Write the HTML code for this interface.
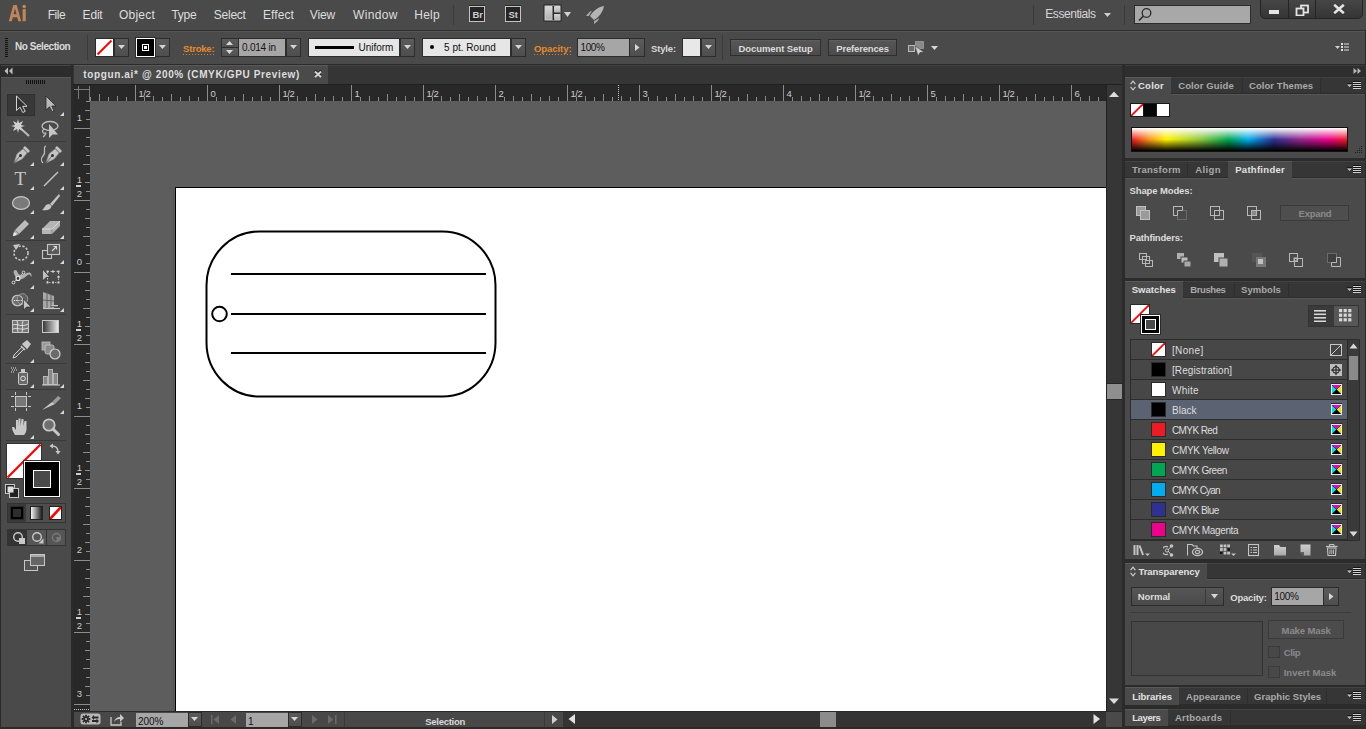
<!DOCTYPE html><html><head><meta charset="utf-8"><style>
*{margin:0;padding:0;box-sizing:border-box}
html,body{width:1366px;height:729px;overflow:hidden;background:#2b2b2b;font-family:"Liberation Sans",sans-serif;color:#d4d4d4;font-size:11px}
div,span,svg{position:absolute}
.t{white-space:nowrap;line-height:1}
.b{font-weight:bold}
</style></head><body><div style="left:0px;top:0px;width:1366px;height:30px;background:#4a4a4a"></div><div style="left:0px;top:30px;width:1366px;height:1px;background:#2e2e2e"></div><svg style="left:8px;top:4px;" width="20" height="18" viewBox="0 0 20 18"><path d="M0.8 17.2 L5.3 1 L8.7 1 L13.2 17.2 L10.2 17.2 L9.2 13.2 L4.8 13.2 L3.8 17.2 Z M5.5 10.2 L8.5 10.2 L7 4.2 Z" fill="#c08659" fill-rule="evenodd"/><rect x="14.6" y="5.2" width="3.2" height="12" fill="#c08659"/><circle cx="16.2" cy="2.6" r="1.8" fill="#c08659"/></svg><div class="t" style="left:47.7px;top:8.74px;font-size:12px;color:#dedede;;letter-spacing:-0.441px">File</div><div class="t" style="left:82.6px;top:8.74px;font-size:12px;color:#dedede;;letter-spacing:-0.189px">Edit</div><div class="t" style="left:119px;top:8.74px;font-size:12px;color:#dedede;;letter-spacing:0.206px">Object</div><div class="t" style="left:171.4px;top:8.74px;font-size:12px;color:#dedede;;letter-spacing:-0.232px">Type</div><div class="t" style="left:213.8px;top:8.74px;font-size:12px;color:#dedede;;letter-spacing:-0.248px">Select</div><div class="t" style="left:263px;top:8.74px;font-size:12px;color:#dedede;;letter-spacing:0.090px">Effect</div><div class="t" style="left:309.8px;top:8.74px;font-size:12px;color:#dedede;;letter-spacing:-0.159px">View</div><div class="t" style="left:353.1px;top:8.74px;font-size:12px;color:#dedede;;letter-spacing:0.346px">Window</div><div class="t" style="left:414.3px;top:8.74px;font-size:12px;color:#dedede;;letter-spacing:0.244px">Help</div><div style="left:453px;top:5px;width:1px;height:20px;background:#3a3a3a"></div><div style="left:1033px;top:5px;width:1px;height:20px;background:#3a3a3a"></div><div style="left:1124px;top:5px;width:1px;height:20px;background:#3a3a3a"></div><div style="left:469px;top:6px;width:16px;height:16px;background:#262626;border:1px solid #c4c4c4;box-shadow:0 -1px 0 #2a2a2a"></div><div class="t" style="left:472.5px;top:9.76px;font-size:9.5px;color:#cdcdcd;font-weight:bold;letter-spacing:-0.2px">Br</div><div style="left:505px;top:6px;width:16px;height:16px;background:#262626;border:1px solid #c4c4c4;box-shadow:0 -1px 0 #2a2a2a"></div><div class="t" style="left:508.5px;top:9.76px;font-size:9.5px;color:#cdcdcd;font-weight:bold;letter-spacing:-0.2px">St</div><svg style="left:543px;top:4px;" width="30" height="19" viewBox="0 0 30 19"><rect x="0.5" y="0.5" width="18" height="17" fill="#222" /><rect x="1.5" y="1.5" width="16" height="15" fill="#d4d4d4"/><defs><linearGradient id="agr" x1="0" y1="0" x2="0" y2="1"><stop offset="0" stop-color="#d8d8d8"/><stop offset="1" stop-color="#b0b0b0"/></linearGradient></defs><rect x="2.5" y="2.5" width="7" height="13" fill="url(#agr)"/><rect x="9.5" y="2" width="2" height="14" fill="#2a2a2a"/><rect x="11" y="2.5" width="6" height="6" fill="url(#agr)"/><rect x="11" y="8.5" width="6.5" height="1.6" fill="#2a2a2a"/><rect x="11" y="10" width="6" height="5.5" fill="url(#agr)"/><polygon points="21,8 28,8 24.5,13" fill="#d0d0d0"/></svg><svg style="left:586px;top:6px;" width="20" height="18" viewBox="0 0 20 18"><path d="M18 0 C12 1 7 5 4 10 L8 14 C13 11 17 6 18 0Z" fill="#b4b4b4"/><path d="M6 5 C4 5 2 7 0 10 L3 10 C4 8 5 6 6 5Z" fill="#a8a8a8"/><path d="M13 12 C13 14 11 16 8 18 L8 15 C10 14 12 13 13 12Z" fill="#a8a8a8"/></svg><div class="t" style="left:1045.3px;top:8.34px;font-size:12px;color:#d6d6d6;;letter-spacing:-0.454px">Essentials</div><svg style="left:1104px;top:13px;" width="7" height="5" viewBox="0 0 7 5"><polygon points="0,0 7,0 3.5,4" fill="#cfcfcf"/></svg><div style="left:1134px;top:5px;width:117px;height:19px;background:#a8a8a8;border:1px solid #2c2c2c"></div><svg style="left:1137px;top:7px;" width="16" height="16" viewBox="0 0 16 16"><circle cx="9.5" cy="6" r="4.3" fill="none" stroke="#2a2a2a" stroke-width="1.3"/><line x1="6.5" y1="9" x2="2" y2="13.5" stroke="#2a2a2a" stroke-width="1.6"/></svg><div style="left:1260px;top:-2px;width:103px;height:21px;background:linear-gradient(#474747,#353535);border:1px solid #242424;border-radius:0 0 5px 5px"></div><div style="left:1288px;top:0px;width:1px;height:18px;background:#242424"></div><div style="left:1315px;top:0px;width:1px;height:18px;background:#242424"></div><div style="left:1269px;top:10px;width:10px;height:4px;background:#e4e4e4"></div><svg style="left:1295px;top:4px;" width="15" height="12" viewBox="0 0 15 12"><rect x="6" y="1.5" width="7" height="7" fill="none" stroke="#e4e4e4" stroke-width="1.8"/><rect x="1.5" y="4.5" width="7" height="7" fill="#3d3d3d" stroke="#e4e4e4" stroke-width="1.8"/></svg><svg style="left:1333px;top:4px;" width="12" height="10" viewBox="0 0 12 10"><path d="M1.2 0.8 L10.8 9.2 M10.8 0.8 L1.2 9.2" stroke="#e4e4e4" stroke-width="2.6"/></svg><div style="left:0px;top:31px;width:1366px;height:1px;background:#565656"></div><div style="left:0px;top:32px;width:1366px;height:32px;background:#4a4a4a"></div><div style="left:0px;top:64px;width:1366px;height:1px;background:#2b2b2b"></div><div style="left:5px;top:38px;width:3px;height:19px;background:repeating-linear-gradient(#111 0 1px,transparent 1px 2px)"></div><div class="t" style="left:14.9px;top:41.53px;font-size:10px;color:#dadada;font-weight:bold;letter-spacing:-0.434px">No Selection</div><div style="left:87px;top:35px;width:1px;height:25px;background:#3a3a3a"></div><div style="left:95px;top:38px;width:19px;height:19px;background:#fff;border:1px solid #2a2a2a"></div><svg style="left:96px;top:39px;" width="17" height="17" viewBox="0 0 17 17"><line x1="1.5" y1="15.5" x2="15.5" y2="1.5" stroke="#f00" stroke-width="2"/></svg><div style="left:114px;top:38px;width:15px;height:19px;background:linear-gradient(#5b5b5b,#4e4e4e);border:1px solid #2c2c2c"></div><svg style="left:118px;top:45px;" width="7" height="5" viewBox="0 0 7 5"><polygon points="0,0 7,0 3.5,4" fill="#d6d6d6"/></svg><div style="left:136px;top:38px;width:19px;height:19px;background:#000;border:1px solid #fff;box-shadow:0 0 0 1px #2a2a2a"></div><div style="left:142px;top:44px;width:7px;height:7px;border:1px solid #fff"></div><div style="left:144px;top:46px;width:3px;height:3px;background:#fff"></div><div style="left:155px;top:38px;width:15px;height:19px;background:linear-gradient(#5b5b5b,#4e4e4e);border:1px solid #2c2c2c"></div><svg style="left:159px;top:45px;" width="7" height="5" viewBox="0 0 7 5"><polygon points="0,0 7,0 3.5,4" fill="#d6d6d6"/></svg><div class="t" style="left:183.1px;top:43.86px;font-size:9.5px;color:#e58a2c;font-weight:bold;letter-spacing:-0.211px">Stroke:</div><div style="left:183.1px;top:53.9px;width:30.9px;height:1px;background:repeating-linear-gradient(90deg,#d9822a 0 1px,transparent 1px 3px)"></div><div style="left:221px;top:38px;width:18px;height:19px;background:#2c2c2c"></div><div style="left:222px;top:39px;width:16px;height:8px;background:linear-gradient(#5c5c5c,#505050)"></div><div style="left:222px;top:48px;width:16px;height:8px;background:linear-gradient(#5c5c5c,#505050)"></div><svg style="left:226px;top:40px;" width="8" height="6" viewBox="0 0 8 6"><polygon points="0,5 7,5 3.5,1" fill="#d8d8d8"/></svg><svg style="left:226px;top:49px;" width="8" height="6" viewBox="0 0 8 6"><polygon points="0,1 7,1 3.5,5" fill="#d8d8d8"/></svg><div style="left:239px;top:38px;width:47px;height:19px;background:#a6a6a6;border:1px solid #2c2c2c;border-left:0"></div><div class="t" style="left:242px;top:42.53px;font-size:10px;color:#141414;;letter-spacing:-0.228px">0.014 in</div><div style="left:286px;top:38px;width:15px;height:19px;background:linear-gradient(#5b5b5b,#4e4e4e);border:1px solid #2c2c2c"></div><svg style="left:290px;top:45px;" width="7" height="5" viewBox="0 0 7 5"><polygon points="0,0 7,0 3.5,4" fill="#d6d6d6"/></svg><div style="left:308px;top:38px;width:92px;height:19px;background:#e6e6e6;border:1px solid #2c2c2c"></div><div style="left:315px;top:46px;width:39px;height:3px;background:#000"></div><div class="t" style="left:358.5px;top:43.23px;font-size:10px;color:#111;;letter-spacing:-0.019px">Uniform</div><div style="left:400px;top:38px;width:15px;height:19px;background:linear-gradient(#5b5b5b,#4e4e4e);border:1px solid #2c2c2c"></div><svg style="left:404px;top:45px;" width="7" height="5" viewBox="0 0 7 5"><polygon points="0,0 7,0 3.5,4" fill="#d6d6d6"/></svg><div style="left:422px;top:38px;width:89px;height:19px;background:#e6e6e6;border:1px solid #2c2c2c"></div><div style="left:430px;top:45px;width:4px;height:4px;background:#000;border-radius:50%"></div><div class="t" style="left:444px;top:43.03px;font-size:10px;color:#111;;letter-spacing:0.018px">5 pt. Round</div><div style="left:511px;top:38px;width:15px;height:19px;background:linear-gradient(#5b5b5b,#4e4e4e);border:1px solid #2c2c2c"></div><svg style="left:515px;top:45px;" width="7" height="5" viewBox="0 0 7 5"><polygon points="0,0 7,0 3.5,4" fill="#d6d6d6"/></svg><div class="t" style="left:534px;top:43.86px;font-size:9.5px;color:#e58a2c;font-weight:bold;letter-spacing:-0.064px">Opacity:</div><div style="left:534px;top:53.9px;width:37px;height:1px;background:repeating-linear-gradient(90deg,#d9822a 0 1px,transparent 1px 3px)"></div><div style="left:577px;top:38px;width:53px;height:19px;background:#a6a6a6;border:1px solid #2c2c2c"></div><div class="t" style="left:580.6px;top:42.53px;font-size:10px;color:#141414;;letter-spacing:-0.426px">100%</div><div style="left:630px;top:38px;width:15px;height:19px;background:linear-gradient(#5b5b5b,#4e4e4e);border:1px solid #2c2c2c;border-left:0"></div><svg style="left:635px;top:44px;" width="5" height="8" viewBox="0 0 5 8"><polygon points="0,0 0,7 4.5,3.5" fill="#d6d6d6"/></svg><div class="t" style="left:651px;top:44.26px;font-size:9.5px;color:#d8d8d8;font-weight:bold;letter-spacing:-0.161px">Style:</div><div style="left:682px;top:38px;width:19px;height:19px;background:#e8e8e8;border:1px solid #2c2c2c"></div><div style="left:701px;top:38px;width:15px;height:19px;background:linear-gradient(#5b5b5b,#4e4e4e);border:1px solid #2c2c2c"></div><svg style="left:705px;top:45px;" width="7" height="5" viewBox="0 0 7 5"><polygon points="0,0 7,0 3.5,4" fill="#d6d6d6"/></svg><div style="left:722px;top:35px;width:1px;height:25px;background:#3a3a3a"></div><div style="left:730px;top:39px;width:91px;height:17px;background:linear-gradient(#575757,#4b4b4b);border:1px solid #2e2e2e;box-shadow:inset 0 1px 0 #5e5e5e"></div><div class="t" style="left:738.5px;top:43.76px;font-size:9.5px;color:#dcdcdc;font-weight:bold;letter-spacing:-0.086px">Document Setup</div><div style="left:828px;top:39px;width:69px;height:17px;background:linear-gradient(#575757,#4b4b4b);border:1px solid #2e2e2e;box-shadow:inset 0 1px 0 #5e5e5e"></div><div class="t" style="left:836.3px;top:43.76px;font-size:9.5px;color:#dcdcdc;font-weight:bold;letter-spacing:-0.174px">Preferences</div><svg style="left:908px;top:40px;" width="18" height="16" viewBox="0 0 18 16"><rect x="0.5" y="5.5" width="6" height="6" fill="#6a6a6a" stroke="#bcbcbc"/><rect x="7.5" y="1.5" width="8" height="7" fill="#8a8a8a" stroke="#bcbcbc" stroke-dasharray="1 1"/><path d="M7 6 L16 12 L12 12.5 L10 16 Z" fill="#d0d0d0" stroke="#333" stroke-width="0.5"/></svg><svg style="left:931px;top:46px;" width="8" height="5" viewBox="0 0 8 5"><polygon points="0,0 7,0 3.5,4" fill="#d6d6d6"/></svg><svg style="left:1335px;top:43px;" width="15" height="9" viewBox="0 0 15 9"><polygon points="0,3 5,3 2.5,6" fill="#d0d0d0"/><g fill="#e0e0e0"><rect x="6" y="0" width="2" height="2"/><rect x="6" y="3" width="2" height="2"/><rect x="6" y="6" width="2" height="2"/><rect x="9" y="0.5" width="5" height="1"/><rect x="9" y="3.5" width="5" height="1"/><rect x="9" y="6.5" width="5" height="1"/></g></svg><div style="left:1365px;top:31px;width:1px;height:34px;background:#2b2b2b"></div><div style="left:1px;top:65px;width:70px;height:12px;background:#2c2c2c;border-top:1px solid #464646"></div><svg style="left:4px;top:67px;" width="10" height="8" viewBox="0 0 10 8"><polygon points="4,0.5 4,7.5 0.5,4" fill="#bdbdbd"/><polygon points="8.5,0.5 8.5,7.5 5,4" fill="#bdbdbd"/></svg><div style="left:1px;top:77px;width:70px;height:650px;background:#4a4a4a;border-top:1px solid #585858"></div><div style="left:26px;top:80px;width:20px;height:4px;background:repeating-linear-gradient(90deg,#111 0 1px,transparent 1px 2px)"></div><div style="left:7px;top:94px;width:28px;height:22px;background:#383838;border:1px solid #303030"></div><div style="left:6px;top:141px;width:60px;height:1px;background:#3a3a3a"></div><div style="left:6px;top:240px;width:60px;height:1px;background:#3a3a3a"></div><div style="left:6px;top:314px;width:60px;height:1px;background:#3a3a3a"></div><div style="left:6px;top:363px;width:60px;height:1px;background:#3a3a3a"></div><div style="left:6px;top:389px;width:60px;height:1px;background:#3a3a3a"></div><div style="left:6px;top:440px;width:60px;height:1px;background:#3a3a3a"></div><svg style="left:10px;top:92px;" width="24" height="24" viewBox="0 0 24 24"><path d="M6.5 4 L6.5 18.5 L10 15.2 L12.8 20.5 L15.2 19.3 L12.6 14.3 L17 14.3 Z" fill="#303030" stroke="#d4d4d4" stroke-width="1" stroke-linejoin="miter"/></svg><svg style="left:39px;top:92px;" width="24" height="24" viewBox="0 0 24 24"><path d="M7 4 L7 18 L10.5 14.8 L13 19.8 L15 19 L12.8 14 L17 14 Z" fill="#b8b8b8" stroke="#2a2a2a" stroke-width="0.8"/></svg><svg style="left:60px;top:112px;" width="4" height="4" viewBox="0 0 4 4"><polygon points="4,0 4,4 0,4" fill="#d8d8d8"/></svg><svg style="left:9px;top:117px;" width="24" height="24" viewBox="0 0 24 24"><path d="M9 9 L20 19" stroke="#bdbdbd" stroke-width="2"/><path d="M9 2 L10 6 L14 4 L12 8 L16 9 L12 10 L14 14 L10 12 L9 16 L8 12 L4 14 L6 10 L2 9 L6 8 L4 4 L8 6Z" fill="#d0d0d0"/></svg><svg style="left:39px;top:118px;" width="24" height="24" viewBox="0 0 24 24"><ellipse cx="11" cy="8" rx="8" ry="4.5" fill="none" stroke="#bdbdbd" stroke-width="1.3"/><path d="M5 11 C2 13 4 16 6 15 C8 14 6 18 4 19" fill="none" stroke="#bdbdbd" stroke-width="1.2"/><path d="M10 6 L10 20 L13.5 16.5 L19 16.5Z" fill="#c4c4c4"/></svg><svg style="left:10px;top:142px;" width="24" height="24" viewBox="0 0 24 24"><path d="M4 21 L7 12 L13 7 L17 11 L12 17 Z" fill="#c4c4c4" stroke="#9a9a9a" stroke-width="0.6"/><path d="M13 6 L15 4 L20 9 L18 11Z" fill="#c4c4c4"/><circle cx="10.5" cy="13.5" r="1.5" fill="#333"/><line x1="4" y1="21" x2="10" y2="14" stroke="#444" stroke-width="0.8"/></svg><svg style="left:30px;top:162px;" width="4" height="4" viewBox="0 0 4 4"><polygon points="4,0 4,4 0,4" fill="#d8d8d8"/></svg><svg style="left:39px;top:142px;" width="24" height="24" viewBox="0 0 24 24"><g transform="translate(3,0)"><path d="M4 21 L7 12 L13 7 L17 11 L12 17 Z" fill="#c4c4c4" stroke="#9a9a9a" stroke-width="0.6"/><path d="M13 6 L15 4 L20 9 L18 11Z" fill="#c4c4c4"/><circle cx="10.5" cy="13.5" r="1.5" fill="#333"/><line x1="4" y1="21" x2="10" y2="14" stroke="#444" stroke-width="0.8"/></g><path d="M7 4 C3 5 8 10 4 14 C2 16 2 19 4 21" fill="none" stroke="#bdbdbd" stroke-width="1.2"/></svg><svg style="left:60px;top:162px;" width="4" height="4" viewBox="0 0 4 4"><polygon points="4,0 4,4 0,4" fill="#d8d8d8"/></svg><div class="t" style="left:14.6px;top:169.22px;font-size:19px;color:#c8c8c8;font-family:'Liberation Serif',serif">T</div><svg style="left:30px;top:186px;" width="4" height="4" viewBox="0 0 4 4"><polygon points="4,0 4,4 0,4" fill="#d8d8d8"/></svg><svg style="left:39px;top:167px;" width="24" height="24" viewBox="0 0 24 24"><line x1="5" y1="19" x2="19" y2="5" stroke="#c4c4c4" stroke-width="1.4"/></svg><svg style="left:60px;top:186px;" width="4" height="4" viewBox="0 0 4 4"><polygon points="4,0 4,4 0,4" fill="#d8d8d8"/></svg><svg style="left:9px;top:191px;" width="24" height="24" viewBox="0 0 24 24"><ellipse cx="12" cy="12" rx="8.5" ry="6.3" fill="#7a7a7a" stroke="#c8c8c8" stroke-width="1.2"/></svg><svg style="left:30px;top:210px;" width="4" height="4" viewBox="0 0 4 4"><polygon points="4,0 4,4 0,4" fill="#d8d8d8"/></svg><svg style="left:39px;top:191px;" width="24" height="24" viewBox="0 0 24 24"><path d="M20 3 L11 13 L13 15 L21 5Z" fill="#c4c4c4"/><path d="M10 13 C6 13 6 17 3 19 C7 20 12 19 12.5 15Z" fill="#c4c4c4"/></svg><svg style="left:60px;top:210px;" width="4" height="4" viewBox="0 0 4 4"><polygon points="4,0 4,4 0,4" fill="#d8d8d8"/></svg><svg style="left:9px;top:216px;" width="24" height="24" viewBox="0 0 24 24"><path d="M4 20 L6 14 L16 4 L20 8 L10 18 Z" fill="#bcbcbc" stroke="#8a8a8a" stroke-width="0.6"/><path d="M4 20 L5 16 L8 19Z" fill="#eee"/><line x1="6" y1="14" x2="10" y2="18" stroke="#777" stroke-width="0.8"/></svg><svg style="left:30px;top:235px;" width="4" height="4" viewBox="0 0 4 4"><polygon points="4,0 4,4 0,4" fill="#d8d8d8"/></svg><svg style="left:39px;top:215px;" width="24" height="24" viewBox="0 0 24 24"><path d="M3 14 L11 6 L21 6 L21 11 L13 19 L3 19Z" fill="#b4b4b4"/><path d="M3 14 L13 14 L21 6" fill="none" stroke="#d8d8d8" stroke-width="1"/><path d="M13 14 L13 19" stroke="#888" stroke-width="1"/></svg><svg style="left:60px;top:235px;" width="4" height="4" viewBox="0 0 4 4"><polygon points="4,0 4,4 0,4" fill="#d8d8d8"/></svg><svg style="left:9px;top:240px;" width="24" height="24" viewBox="0 0 24 24"><circle cx="12" cy="13" r="7" fill="none" stroke="#c4c4c4" stroke-width="1.6" stroke-dasharray="2.2 1.6"/><polygon points="4,5 11,4 7,10" fill="#c4c4c4"/></svg><svg style="left:30px;top:260px;" width="4" height="4" viewBox="0 0 4 4"><polygon points="4,0 4,4 0,4" fill="#d8d8d8"/></svg><svg style="left:39px;top:240px;" width="24" height="24" viewBox="0 0 24 24"><rect x="3.5" y="10.5" width="9" height="8" fill="none" stroke="#c4c4c4" stroke-width="1.1"/><rect x="8.5" y="4.5" width="12" height="10" fill="#5a5a5a" stroke="#c4c4c4" stroke-width="1.1"/><path d="M13 11 L17.5 6.5 M14.5 6.5 L17.5 6.5 L17.5 9.5" stroke="#d8d8d8" stroke-width="1.1" fill="none"/></svg><svg style="left:60px;top:260px;" width="4" height="4" viewBox="0 0 4 4"><polygon points="4,0 4,4 0,4" fill="#d8d8d8"/></svg><svg style="left:9px;top:265px;" width="24" height="24" viewBox="0 0 24 24"><path d="M5 5.5 C4 7 5 9 6 11 C7 14 9 15 13 14 C16 13 18 10 20 9.5 C21.5 9.5 22 11 22 12.5 C23.5 10 22 7.5 20 7.5 C17 7.5 15 10 12 10 C9 10 8.5 6 7 5 Z" fill="#b0b0b0"/><path d="M4.5 17.5 L9 13.5 L14.5 7.5" stroke="#e0e0e0" stroke-width="0.9"/><circle cx="9" cy="13.5" r="2" fill="#333" stroke="#f0f0f0" stroke-width="1.1"/><circle cx="4.5" cy="17.5" r="1.4" fill="#444" stroke="#e8e8e8" stroke-width="0.9"/><circle cx="14.5" cy="7.5" r="1.4" fill="#444" stroke="#e8e8e8" stroke-width="0.9"/></svg><svg style="left:30px;top:285px;" width="4" height="4" viewBox="0 0 4 4"><polygon points="4,0 4,4 0,4" fill="#d8d8d8"/></svg><svg style="left:39px;top:265px;" width="24" height="24" viewBox="0 0 24 24"><rect x="8.5" y="6.5" width="11" height="11" fill="none" stroke="#c8c8c8" stroke-width="0.9" stroke-dasharray="1.5 1.5"/><g fill="#d0d0d0"><rect x="7.5" y="5.5" width="2" height="2"/><rect x="13" y="5.5" width="2" height="2"/><rect x="18.5" y="5.5" width="2" height="2"/><rect x="7.5" y="16.5" width="2" height="2"/><rect x="13" y="16.5" width="2" height="2"/><rect x="18.5" y="16.5" width="2" height="2"/><rect x="18.5" y="11" width="2" height="2"/></g><path d="M3.5 4 L3.5 16 L7 12.5 L11 12.5 Z" fill="#c0c0c0" stroke="#222" stroke-width="0.6"/></svg><svg style="left:9px;top:289px;" width="24" height="24" viewBox="0 0 24 24"><circle cx="8.5" cy="11.5" r="5.3" fill="#6e6e6e" stroke="#bdbdbd" stroke-width="1.1"/><circle cx="13.5" cy="10" r="5.3" fill="#5e5e5e" stroke="#9a9a9a" stroke-width="1"/><circle cx="8.5" cy="11.5" r="5.3" fill="none" stroke="#bdbdbd" stroke-width="1.1"/><path d="M5 11.5 H15" stroke="#f0f0f0" stroke-width="1.1" stroke-dasharray="1.2 1"/><path d="M14.5 10 L14.5 21 L17.5 18 L22 18 Z" fill="#c4c4c4" stroke="#222" stroke-width="0.6"/></svg><svg style="left:30px;top:308px;" width="4" height="4" viewBox="0 0 4 4"><polygon points="4,0 4,4 0,4" fill="#d8d8d8"/></svg><svg style="left:39px;top:289px;" width="24" height="24" viewBox="0 0 24 24"><path d="M4 3 L15 7 L15 20 L4 20 Z" fill="#a8a8a8"/><path d="M8 4.5 V20 M12 6 V20 M4 11 L15 12" stroke="#5a5a5a" stroke-width="0.9"/><path d="M12.5 16 H19 V18 H12.5Z M4 19 H21 V20.5 H4Z" fill="#c8c8c8"/><path d="M12 17.5 H20 M3.5 20.5 H21" stroke="#2a2a2a" stroke-width="0.6"/></svg><svg style="left:60px;top:308px;" width="4" height="4" viewBox="0 0 4 4"><polygon points="4,0 4,4 0,4" fill="#d8d8d8"/></svg><svg style="left:9px;top:315px;" width="24" height="24" viewBox="0 0 24 24"><rect x="3.5" y="5.5" width="16" height="12" fill="#777" stroke="#c8c8c8" stroke-width="1"/><path d="M4 10 C8 8 12 13 19 9 M4 14 C9 12 12 16 19 13 M8 6 C10 10 7 13 9 17 M14 6 C12 10 15 13 13 17" stroke="#e8e8e8" stroke-width="0.9" fill="none"/></svg><svg style="left:39px;top:315px" width="24" height="24"><defs><linearGradient id="gr1"><stop offset="0" stop-color="#333"/><stop offset="1" stop-color="#eee"/></linearGradient></defs><rect x="3.5" y="5.5" width="16" height="12" fill="url(#gr1)" stroke="#c8c8c8" stroke-width="1"/></svg><svg style="left:9px;top:338px;" width="24" height="24" viewBox="0 0 24 24"><path d="M4 20 L5 17 L13 9 L15 11 L7 19Z" fill="#555" stroke="#d0d0d0" stroke-width="1"/><path d="M12 8 L16 12 M14 6 L18 3 L21 6 L18 10Z" fill="#c8c8c8" stroke="#c8c8c8" stroke-width="1.5"/></svg><svg style="left:30px;top:359px;" width="4" height="4" viewBox="0 0 4 4"><polygon points="4,0 4,4 0,4" fill="#d8d8d8"/></svg><svg style="left:39px;top:338px;" width="24" height="24" viewBox="0 0 24 24"><rect x="3" y="4" width="8" height="8" fill="#9a9a9a" stroke="#c0c0c0" stroke-width="0.8"/><rect x="6" y="7" width="9" height="9" rx="2" fill="#8a8a8a" stroke="#c8c8c8" stroke-width="0.8"/><circle cx="16" cy="16" r="5" fill="#6a6a6a" stroke="#d0d0d0" stroke-width="1.2"/></svg><svg style="left:9px;top:364px;" width="24" height="24" viewBox="0 0 24 24"><rect x="9.5" y="8.5" width="9" height="12" rx="1" fill="#6a6a6a" stroke="#c8c8c8" stroke-width="1"/><rect x="12" y="5" width="4" height="3" fill="#c8c8c8"/><circle cx="14" cy="14.5" r="2.3" fill="none" stroke="#e0e0e0" stroke-width="1"/><path d="M2 4 h1 M4 4 h1 M6 4 h1 M3 6 h1 M5 6 h1 M7 6 h1 M2 8 h1 M4 8 h1" stroke="#e0e0e0" stroke-width="1"/></svg><svg style="left:30px;top:384px;" width="4" height="4" viewBox="0 0 4 4"><polygon points="4,0 4,4 0,4" fill="#d8d8d8"/></svg><svg style="left:39px;top:365px;" width="24" height="24" viewBox="0 0 24 24"><rect x="4.5" y="11.5" width="4" height="8" fill="#888" stroke="#c8c8c8" stroke-width="0.8"/><rect x="9.5" y="4.5" width="4" height="15" fill="#888" stroke="#c8c8c8" stroke-width="0.8"/><rect x="14.5" y="8.5" width="4" height="11" fill="#888" stroke="#c8c8c8" stroke-width="0.8"/><line x1="3" y1="20" x2="21" y2="20" stroke="#d0d0d0" stroke-width="1"/></svg><svg style="left:60px;top:384px;" width="4" height="4" viewBox="0 0 4 4"><polygon points="4,0 4,4 0,4" fill="#d8d8d8"/></svg><svg style="left:9px;top:390px;" width="24" height="24" viewBox="0 0 24 24"><rect x="6.5" y="6.5" width="11" height="10" fill="#777" stroke="#c8c8c8" stroke-width="1"/><path d="M2 6.5 h3 M19 6.5 h3 M2 16.5 h3 M19 16.5 h3 M6.5 2 v3 M17.5 2 v3 M6.5 18 v3 M17.5 18 v3" stroke="#c8c8c8" stroke-width="1"/></svg><svg style="left:39px;top:391px;" width="24" height="24" viewBox="0 0 24 24"><path d="M3 19 L13 11 L16 13 Z" fill="#c8c8c8"/><path d="M13 11 L19 5 L22 7 L16 13Z" fill="#9a9a9a"/></svg><svg style="left:60px;top:410px;" width="4" height="4" viewBox="0 0 4 4"><polygon points="4,0 4,4 0,4" fill="#d8d8d8"/></svg><svg style="left:9px;top:415px;" width="24" height="24" viewBox="0 0 24 24"><path d="M6 20 C4 17 3 14 3 12 L5 12 L7 15 L7 5 L9 5 L9 11 L9.5 3.5 L11.5 3.5 L11.5 11 L12.5 4 L14.5 4 L14.5 11 L15.5 6 L17.5 6 L17.5 14 C17.5 17 16 19 15 20Z" fill="#c8c8c8"/></svg><svg style="left:30px;top:435px;" width="4" height="4" viewBox="0 0 4 4"><polygon points="4,0 4,4 0,4" fill="#d8d8d8"/></svg><svg style="left:39px;top:415px;" width="24" height="24" viewBox="0 0 24 24"><circle cx="10" cy="10" r="5.7" fill="#6f6f6f" stroke="#c8c8c8" stroke-width="1.8"/><line x1="14" y1="14" x2="19.5" y2="19.5" stroke="#c8c8c8" stroke-width="3" stroke-linecap="round"/></svg><div style="left:6px;top:443px;width:36px;height:36px;background:#fff;border:1px solid #333"></div><svg style="left:7px;top:444px;" width="34" height="34" viewBox="0 0 34 34"><line x1="0.5" y1="33.5" x2="33.5" y2="0.5" stroke="#f00" stroke-width="2.2"/></svg><div style="left:24px;top:461px;width:36px;height:36px;background:#000;border:1px solid #fff;box-shadow:0 0 0 1px #333"></div><div style="left:33px;top:470px;width:18px;height:18px;background:#4a4a4a;border:1px solid #fff;box-shadow:0 0 0 1px #000"></div><svg style="left:49px;top:443px;" width="13" height="13" viewBox="0 0 13 13"><path d="M3 3 C7 3 9 5 9 9" fill="none" stroke="#c8c8c8" stroke-width="1.3"/><polygon points="0.5,3 4,0.5 4,5.5" fill="#c8c8c8"/><polygon points="9,11.5 6.5,8 11.5,8" fill="#c8c8c8"/></svg><svg style="left:5px;top:484px;" width="14" height="14" viewBox="0 0 14 14"><rect x="0.5" y="0.5" width="9" height="9" fill="#222" stroke="#c8c8c8" stroke-width="1"/><rect x="4.5" y="4.5" width="9" height="9" fill="#222" stroke="#c8c8c8" stroke-width="1"/><rect x="2.5" y="2.5" width="6" height="6" fill="#e0e0e0"/></svg><div style="left:7px;top:503px;width:59px;height:20px;background:#3a3a3a;border:1px solid #333"></div><div style="left:26px;top:504px;width:20px;height:18px;background:#4e4e4e"></div><div style="left:46px;top:504px;width:19px;height:18px;background:#4e4e4e"></div><div style="left:10px;top:506px;width:14px;height:14px;background:#000;border:1px solid #2a2a2a"></div><div style="left:13px;top:509px;width:8px;height:8px;background:#2e2e2e"></div><svg style="left:30px;top:506px" width="13" height="14"><defs><linearGradient id="gr2"><stop offset="0" stop-color="#fff"/><stop offset="1" stop-color="#111"/></linearGradient></defs><rect x="0.5" y="0.5" width="12" height="13" fill="url(#gr2)" stroke="#222"/></svg><div style="left:49px;top:506px;width:13px;height:14px;background:#fff;border:1px solid #222"></div><svg style="left:50px;top:507px;" width="11" height="12" viewBox="0 0 11 12"><line x1="0" y1="12" x2="11" y2="0" stroke="#f00" stroke-width="2.6"/></svg><div style="left:7px;top:529px;width:59px;height:17px;background:#333;border:1px solid #333"></div><div style="left:27px;top:530px;width:19px;height:15px;background:#555"></div><div style="left:47px;top:530px;width:18px;height:15px;background:#555"></div><svg style="left:12px;top:531px;" width="14" height="14" viewBox="0 0 14 14"><circle cx="6" cy="6" r="4.3" fill="none" stroke="#c8c8c8" stroke-width="1.4"/><rect x="7" y="7" width="6" height="6" fill="#c8c8c8"/></svg><svg style="left:31px;top:531px;" width="14" height="14" viewBox="0 0 14 14"><circle cx="6" cy="6" r="4.3" fill="#555" stroke="#c8c8c8" stroke-width="1.4"/><path d="M8 8 L13 8 L13 13 L8 13Z" fill="none" stroke="#c8c8c8" stroke-width="0"/><polygon points="7.5,12.5 12.5,7.5 12.5,12.5" fill="#c8c8c8"/></svg><svg style="left:50px;top:531px;" width="14" height="14" viewBox="0 0 14 14"><circle cx="6.5" cy="6.5" r="4" fill="none" stroke="#7a7a7a" stroke-width="1.3"/><rect x="6.5" y="6" width="4" height="4" fill="#7a7a7a"/></svg><svg style="left:24px;top:554px;" width="22" height="17" viewBox="0 0 22 17"><rect x="0.5" y="6.5" width="13" height="10" fill="#555" stroke="#c8c8c8" stroke-width="1"/><rect x="6.5" y="0.5" width="14" height="11" fill="#666" stroke="#c8c8c8" stroke-width="1"/><rect x="7" y="1" width="13" height="2" fill="#aaa"/></svg><div style="left:73px;top:65px;width:1049px;height:19px;background:#353535;border-top:1px solid #424242"></div><div style="left:74px;top:65px;width:254px;height:19px;background:#4a4a4a;border-top:1px solid #5a5a5a"></div><div class="t" style="left:83.2px;top:70.13px;font-size:10px;color:#dedede;font-weight:bold;letter-spacing:0.643px">topgun.ai* @ 200% (CMYK/GPU Preview)</div><svg style="left:314px;top:70px;" width="8" height="8" viewBox="0 0 8 8"><path d="M1 0.5 L7 6 M7 0.5 L1 6" stroke="#111" stroke-width="1.8"/><path d="M1 1.5 L7 7 M7 1.5 L1 7" stroke="#d8d8d8" stroke-width="1.8"/></svg><div style="left:73px;top:84px;width:1033px;height:17px;background:#282828"></div><div style="left:73px;top:101px;width:17px;height:610px;background:#282828"></div><div style="left:78px;top:86px;width:1px;height:13px;background:#7a7a7a"></div><div style="left:89px;top:86px;width:1px;height:15px;background:#7a7a7a"></div><div style="left:74px;top:89px;width:16px;height:1px;background:#7a7a7a"></div><div style="left:73px;top:84px;width:1049px;height:1px;background:#202020"></div><div style="left:90px;top:101px;width:1016px;height:610px;background:#5d5d5d"></div><svg style="left:73px;top:84px;" width="1033" height="17" viewBox="0 0 1033 17"><rect x="17" y="13" width="1" height="4" fill="#8c8c8c"/><rect x="26" y="10" width="1" height="7" fill="#8c8c8c"/><rect x="35" y="13" width="1" height="4" fill="#8c8c8c"/><rect x="44" y="12" width="1" height="5" fill="#8c8c8c"/><rect x="53" y="13" width="1" height="4" fill="#8c8c8c"/><rect x="62" y="1" width="1" height="16" fill="#8c8c8c"/><rect x="71" y="13" width="1" height="4" fill="#8c8c8c"/><rect x="80" y="12" width="1" height="5" fill="#8c8c8c"/><rect x="89" y="13" width="1" height="4" fill="#8c8c8c"/><rect x="98" y="10" width="1" height="7" fill="#8c8c8c"/><rect x="107" y="13" width="1" height="4" fill="#8c8c8c"/><rect x="116" y="12" width="1" height="5" fill="#8c8c8c"/><rect x="125" y="13" width="1" height="4" fill="#8c8c8c"/><rect x="134" y="1" width="1" height="16" fill="#8c8c8c"/><rect x="143" y="13" width="1" height="4" fill="#8c8c8c"/><rect x="152" y="12" width="1" height="5" fill="#8c8c8c"/><rect x="161" y="13" width="1" height="4" fill="#8c8c8c"/><rect x="170" y="10" width="1" height="7" fill="#8c8c8c"/><rect x="179" y="13" width="1" height="4" fill="#8c8c8c"/><rect x="188" y="12" width="1" height="5" fill="#8c8c8c"/><rect x="197" y="13" width="1" height="4" fill="#8c8c8c"/><rect x="206" y="1" width="1" height="16" fill="#8c8c8c"/><rect x="215" y="13" width="1" height="4" fill="#8c8c8c"/><rect x="224" y="12" width="1" height="5" fill="#8c8c8c"/><rect x="233" y="13" width="1" height="4" fill="#8c8c8c"/><rect x="242" y="10" width="1" height="7" fill="#8c8c8c"/><rect x="251" y="13" width="1" height="4" fill="#8c8c8c"/><rect x="260" y="12" width="1" height="5" fill="#8c8c8c"/><rect x="269" y="13" width="1" height="4" fill="#8c8c8c"/><rect x="278" y="1" width="1" height="16" fill="#8c8c8c"/><rect x="287" y="13" width="1" height="4" fill="#8c8c8c"/><rect x="296" y="12" width="1" height="5" fill="#8c8c8c"/><rect x="305" y="13" width="1" height="4" fill="#8c8c8c"/><rect x="314" y="10" width="1" height="7" fill="#8c8c8c"/><rect x="323" y="13" width="1" height="4" fill="#8c8c8c"/><rect x="332" y="12" width="1" height="5" fill="#8c8c8c"/><rect x="341" y="13" width="1" height="4" fill="#8c8c8c"/><rect x="350" y="1" width="1" height="16" fill="#8c8c8c"/><rect x="359" y="13" width="1" height="4" fill="#8c8c8c"/><rect x="368" y="12" width="1" height="5" fill="#8c8c8c"/><rect x="377" y="13" width="1" height="4" fill="#8c8c8c"/><rect x="386" y="10" width="1" height="7" fill="#8c8c8c"/><rect x="395" y="13" width="1" height="4" fill="#8c8c8c"/><rect x="404" y="12" width="1" height="5" fill="#8c8c8c"/><rect x="413" y="13" width="1" height="4" fill="#8c8c8c"/><rect x="422" y="1" width="1" height="16" fill="#8c8c8c"/><rect x="431" y="13" width="1" height="4" fill="#8c8c8c"/><rect x="440" y="12" width="1" height="5" fill="#8c8c8c"/><rect x="449" y="13" width="1" height="4" fill="#8c8c8c"/><rect x="458" y="10" width="1" height="7" fill="#8c8c8c"/><rect x="467" y="13" width="1" height="4" fill="#8c8c8c"/><rect x="476" y="12" width="1" height="5" fill="#8c8c8c"/><rect x="485" y="13" width="1" height="4" fill="#8c8c8c"/><rect x="494" y="1" width="1" height="16" fill="#8c8c8c"/><rect x="503" y="13" width="1" height="4" fill="#8c8c8c"/><rect x="512" y="12" width="1" height="5" fill="#8c8c8c"/><rect x="521" y="13" width="1" height="4" fill="#8c8c8c"/><rect x="530" y="10" width="1" height="7" fill="#8c8c8c"/><rect x="539" y="13" width="1" height="4" fill="#8c8c8c"/><rect x="548" y="12" width="1" height="5" fill="#8c8c8c"/><rect x="557" y="13" width="1" height="4" fill="#8c8c8c"/><rect x="566" y="1" width="1" height="16" fill="#8c8c8c"/><rect x="575" y="13" width="1" height="4" fill="#8c8c8c"/><rect x="584" y="12" width="1" height="5" fill="#8c8c8c"/><rect x="593" y="13" width="1" height="4" fill="#8c8c8c"/><rect x="602" y="10" width="1" height="7" fill="#8c8c8c"/><rect x="611" y="13" width="1" height="4" fill="#8c8c8c"/><rect x="620" y="12" width="1" height="5" fill="#8c8c8c"/><rect x="629" y="13" width="1" height="4" fill="#8c8c8c"/><rect x="638" y="1" width="1" height="16" fill="#8c8c8c"/><rect x="647" y="13" width="1" height="4" fill="#8c8c8c"/><rect x="656" y="12" width="1" height="5" fill="#8c8c8c"/><rect x="665" y="13" width="1" height="4" fill="#8c8c8c"/><rect x="674" y="10" width="1" height="7" fill="#8c8c8c"/><rect x="683" y="13" width="1" height="4" fill="#8c8c8c"/><rect x="692" y="12" width="1" height="5" fill="#8c8c8c"/><rect x="701" y="13" width="1" height="4" fill="#8c8c8c"/><rect x="710" y="1" width="1" height="16" fill="#8c8c8c"/><rect x="719" y="13" width="1" height="4" fill="#8c8c8c"/><rect x="728" y="12" width="1" height="5" fill="#8c8c8c"/><rect x="737" y="13" width="1" height="4" fill="#8c8c8c"/><rect x="746" y="10" width="1" height="7" fill="#8c8c8c"/><rect x="755" y="13" width="1" height="4" fill="#8c8c8c"/><rect x="764" y="12" width="1" height="5" fill="#8c8c8c"/><rect x="773" y="13" width="1" height="4" fill="#8c8c8c"/><rect x="782" y="1" width="1" height="16" fill="#8c8c8c"/><rect x="791" y="13" width="1" height="4" fill="#8c8c8c"/><rect x="800" y="12" width="1" height="5" fill="#8c8c8c"/><rect x="809" y="13" width="1" height="4" fill="#8c8c8c"/><rect x="818" y="10" width="1" height="7" fill="#8c8c8c"/><rect x="827" y="13" width="1" height="4" fill="#8c8c8c"/><rect x="836" y="12" width="1" height="5" fill="#8c8c8c"/><rect x="845" y="13" width="1" height="4" fill="#8c8c8c"/><rect x="854" y="1" width="1" height="16" fill="#8c8c8c"/><rect x="863" y="13" width="1" height="4" fill="#8c8c8c"/><rect x="872" y="12" width="1" height="5" fill="#8c8c8c"/><rect x="881" y="13" width="1" height="4" fill="#8c8c8c"/><rect x="890" y="10" width="1" height="7" fill="#8c8c8c"/><rect x="899" y="13" width="1" height="4" fill="#8c8c8c"/><rect x="908" y="12" width="1" height="5" fill="#8c8c8c"/><rect x="917" y="13" width="1" height="4" fill="#8c8c8c"/><rect x="926" y="1" width="1" height="16" fill="#8c8c8c"/><rect x="935" y="13" width="1" height="4" fill="#8c8c8c"/><rect x="944" y="12" width="1" height="5" fill="#8c8c8c"/><rect x="953" y="13" width="1" height="4" fill="#8c8c8c"/><rect x="962" y="10" width="1" height="7" fill="#8c8c8c"/><rect x="971" y="13" width="1" height="4" fill="#8c8c8c"/><rect x="980" y="12" width="1" height="5" fill="#8c8c8c"/><rect x="989" y="13" width="1" height="4" fill="#8c8c8c"/><rect x="998" y="1" width="1" height="16" fill="#8c8c8c"/><rect x="1007" y="13" width="1" height="4" fill="#8c8c8c"/><rect x="1016" y="12" width="1" height="5" fill="#8c8c8c"/><rect x="1025" y="13" width="1" height="4" fill="#8c8c8c"/><rect x="545" y="1" width="1" height="1" fill="#c8c8c8"/><rect x="545" y="3" width="1" height="1" fill="#c8c8c8"/><rect x="545" y="5" width="1" height="1" fill="#c8c8c8"/><rect x="545" y="7" width="1" height="1" fill="#c8c8c8"/><rect x="545" y="9" width="1" height="1" fill="#c8c8c8"/><rect x="545" y="11" width="1" height="1" fill="#c8c8c8"/><rect x="545" y="13" width="1" height="1" fill="#c8c8c8"/><rect x="545" y="15" width="1" height="1" fill="#c8c8c8"/></svg><div class="t" style="left:138.5px;top:89.16px;font-size:9.5px;color:#cdcdcd;letter-spacing:-0.5px">1/2</div><div class="t" style="left:210.5px;top:89.16px;font-size:9.5px;color:#cdcdcd;letter-spacing:-0.5px">0</div><div class="t" style="left:282.5px;top:89.16px;font-size:9.5px;color:#cdcdcd;letter-spacing:-0.5px">1/2</div><div class="t" style="left:354.5px;top:89.16px;font-size:9.5px;color:#cdcdcd;letter-spacing:-0.5px">1</div><div class="t" style="left:426.5px;top:89.16px;font-size:9.5px;color:#cdcdcd;letter-spacing:-0.5px">1/2</div><div class="t" style="left:498.5px;top:89.16px;font-size:9.5px;color:#cdcdcd;letter-spacing:-0.5px">2</div><div class="t" style="left:570.5px;top:89.16px;font-size:9.5px;color:#cdcdcd;letter-spacing:-0.5px">1/2</div><div class="t" style="left:642.5px;top:89.16px;font-size:9.5px;color:#cdcdcd;letter-spacing:-0.5px">3</div><div class="t" style="left:714.5px;top:89.16px;font-size:9.5px;color:#cdcdcd;letter-spacing:-0.5px">1/2</div><div class="t" style="left:786.5px;top:89.16px;font-size:9.5px;color:#cdcdcd;letter-spacing:-0.5px">4</div><div class="t" style="left:858.5px;top:89.16px;font-size:9.5px;color:#cdcdcd;letter-spacing:-0.5px">1/2</div><div class="t" style="left:930.5px;top:89.16px;font-size:9.5px;color:#cdcdcd;letter-spacing:-0.5px">5</div><div class="t" style="left:1002.5px;top:89.16px;font-size:9.5px;color:#cdcdcd;letter-spacing:-0.5px">1/2</div><div class="t" style="left:1074.5px;top:89.16px;font-size:9.5px;color:#cdcdcd;letter-spacing:-0.5px">6</div><svg style="left:73px;top:101px;" width="17" height="610" viewBox="0 0 17 610"><rect x="13" y="0" width="4" height="1" fill="#8c8c8c"/><rect x="12" y="9" width="5" height="1" fill="#8c8c8c"/><rect x="13" y="18" width="4" height="1" fill="#8c8c8c"/><rect x="1" y="27" width="16" height="1" fill="#8c8c8c"/><rect x="13" y="36" width="4" height="1" fill="#8c8c8c"/><rect x="12" y="45" width="5" height="1" fill="#8c8c8c"/><rect x="13" y="54" width="4" height="1" fill="#8c8c8c"/><rect x="10" y="63" width="7" height="1" fill="#8c8c8c"/><rect x="13" y="72" width="4" height="1" fill="#8c8c8c"/><rect x="12" y="81" width="5" height="1" fill="#8c8c8c"/><rect x="13" y="90" width="4" height="1" fill="#8c8c8c"/><rect x="1" y="99" width="16" height="1" fill="#8c8c8c"/><rect x="13" y="108" width="4" height="1" fill="#8c8c8c"/><rect x="12" y="117" width="5" height="1" fill="#8c8c8c"/><rect x="13" y="126" width="4" height="1" fill="#8c8c8c"/><rect x="10" y="135" width="7" height="1" fill="#8c8c8c"/><rect x="13" y="144" width="4" height="1" fill="#8c8c8c"/><rect x="12" y="153" width="5" height="1" fill="#8c8c8c"/><rect x="13" y="162" width="4" height="1" fill="#8c8c8c"/><rect x="1" y="171" width="16" height="1" fill="#8c8c8c"/><rect x="13" y="180" width="4" height="1" fill="#8c8c8c"/><rect x="12" y="189" width="5" height="1" fill="#8c8c8c"/><rect x="13" y="198" width="4" height="1" fill="#8c8c8c"/><rect x="10" y="207" width="7" height="1" fill="#8c8c8c"/><rect x="13" y="216" width="4" height="1" fill="#8c8c8c"/><rect x="12" y="225" width="5" height="1" fill="#8c8c8c"/><rect x="13" y="234" width="4" height="1" fill="#8c8c8c"/><rect x="1" y="243" width="16" height="1" fill="#8c8c8c"/><rect x="13" y="252" width="4" height="1" fill="#8c8c8c"/><rect x="12" y="261" width="5" height="1" fill="#8c8c8c"/><rect x="13" y="270" width="4" height="1" fill="#8c8c8c"/><rect x="10" y="279" width="7" height="1" fill="#8c8c8c"/><rect x="13" y="288" width="4" height="1" fill="#8c8c8c"/><rect x="12" y="297" width="5" height="1" fill="#8c8c8c"/><rect x="13" y="306" width="4" height="1" fill="#8c8c8c"/><rect x="1" y="315" width="16" height="1" fill="#8c8c8c"/><rect x="13" y="324" width="4" height="1" fill="#8c8c8c"/><rect x="12" y="333" width="5" height="1" fill="#8c8c8c"/><rect x="13" y="342" width="4" height="1" fill="#8c8c8c"/><rect x="10" y="351" width="7" height="1" fill="#8c8c8c"/><rect x="13" y="360" width="4" height="1" fill="#8c8c8c"/><rect x="12" y="369" width="5" height="1" fill="#8c8c8c"/><rect x="13" y="378" width="4" height="1" fill="#8c8c8c"/><rect x="1" y="387" width="16" height="1" fill="#8c8c8c"/><rect x="13" y="396" width="4" height="1" fill="#8c8c8c"/><rect x="12" y="405" width="5" height="1" fill="#8c8c8c"/><rect x="13" y="414" width="4" height="1" fill="#8c8c8c"/><rect x="10" y="423" width="7" height="1" fill="#8c8c8c"/><rect x="13" y="432" width="4" height="1" fill="#8c8c8c"/><rect x="12" y="441" width="5" height="1" fill="#8c8c8c"/><rect x="13" y="450" width="4" height="1" fill="#8c8c8c"/><rect x="1" y="459" width="16" height="1" fill="#8c8c8c"/><rect x="13" y="468" width="4" height="1" fill="#8c8c8c"/><rect x="12" y="477" width="5" height="1" fill="#8c8c8c"/><rect x="13" y="486" width="4" height="1" fill="#8c8c8c"/><rect x="10" y="495" width="7" height="1" fill="#8c8c8c"/><rect x="13" y="504" width="4" height="1" fill="#8c8c8c"/><rect x="12" y="513" width="5" height="1" fill="#8c8c8c"/><rect x="13" y="522" width="4" height="1" fill="#8c8c8c"/><rect x="1" y="531" width="16" height="1" fill="#8c8c8c"/><rect x="13" y="540" width="4" height="1" fill="#8c8c8c"/><rect x="12" y="549" width="5" height="1" fill="#8c8c8c"/><rect x="13" y="558" width="4" height="1" fill="#8c8c8c"/><rect x="10" y="567" width="7" height="1" fill="#8c8c8c"/><rect x="13" y="576" width="4" height="1" fill="#8c8c8c"/><rect x="12" y="585" width="5" height="1" fill="#8c8c8c"/><rect x="13" y="594" width="4" height="1" fill="#8c8c8c"/><rect x="1" y="603" width="16" height="1" fill="#8c8c8c"/><rect x="1" y="608" width="1" height="1" fill="#c0c0c0"/><rect x="3" y="608" width="1" height="1" fill="#c0c0c0"/><rect x="5" y="608" width="1" height="1" fill="#c0c0c0"/><rect x="7" y="608" width="1" height="1" fill="#c0c0c0"/><rect x="9" y="608" width="1" height="1" fill="#c0c0c0"/><rect x="11" y="608" width="1" height="1" fill="#c0c0c0"/><rect x="13" y="608" width="1" height="1" fill="#c0c0c0"/><rect x="15" y="608" width="1" height="1" fill="#c0c0c0"/></svg><div class="t" style="left:76.8px;top:112.96px;font-size:9.5px;color:#cdcdcd;">1</div><div class="t" style="left:76.8px;top:174.96px;font-size:9.5px;color:#cdcdcd;">1</div><div style="left:76px;top:185px;width:5px;height:2px;background:#cdcdcd"></div><div class="t" style="left:76.8px;top:189.46px;font-size:9.5px;color:#cdcdcd;">2</div><div class="t" style="left:76.8px;top:256.96px;font-size:9.5px;color:#cdcdcd;">0</div><div class="t" style="left:76.8px;top:318.96px;font-size:9.5px;color:#cdcdcd;">1</div><div style="left:76px;top:329px;width:5px;height:2px;background:#cdcdcd"></div><div class="t" style="left:76.8px;top:333.46px;font-size:9.5px;color:#cdcdcd;">2</div><div class="t" style="left:76.8px;top:400.96px;font-size:9.5px;color:#cdcdcd;">1</div><div class="t" style="left:76.8px;top:462.96px;font-size:9.5px;color:#cdcdcd;">1</div><div style="left:76px;top:473px;width:5px;height:2px;background:#cdcdcd"></div><div class="t" style="left:76.8px;top:477.46px;font-size:9.5px;color:#cdcdcd;">2</div><div class="t" style="left:76.8px;top:544.96px;font-size:9.5px;color:#cdcdcd;">2</div><div class="t" style="left:76.8px;top:606.96px;font-size:9.5px;color:#cdcdcd;">1</div><div style="left:76px;top:617px;width:5px;height:2px;background:#cdcdcd"></div><div class="t" style="left:76.8px;top:621.46px;font-size:9.5px;color:#cdcdcd;">2</div><div class="t" style="left:76.8px;top:688.96px;font-size:9.5px;color:#cdcdcd;">3</div><div style="left:173px;top:191px;width:1px;height:520px;background:#555"></div><div style="left:175px;top:187px;width:931px;height:524px;background:#000"></div><div style="left:176px;top:188px;width:930px;height:523px;background:#fff"></div><svg style="left:176px;top:188px;" width="930" height="523" viewBox="0 0 930 523"><rect x="30.5" y="43.5" width="289" height="165" rx="53" ry="54" fill="none" stroke="#000" stroke-width="2"/><line x1="55" y1="86" x2="310" y2="86" stroke="#000" stroke-width="2"/><line x1="55" y1="126" x2="310" y2="126" stroke="#000" stroke-width="2"/><line x1="55" y1="165" x2="310" y2="165" stroke="#000" stroke-width="2"/><circle cx="43.5" cy="126" r="7.3" fill="#fff" stroke="#000" stroke-width="2"/></svg><div style="left:1106px;top:85px;width:16px;height:626px;background:#363636;border-left:1px solid #222"></div><svg style="left:1109px;top:91px;" width="11" height="7" viewBox="0 0 11 7"><polygon points="0,6 10,6 5,0.5" fill="#dcdcdc"/></svg><svg style="left:1109px;top:698px;" width="11" height="7" viewBox="0 0 11 7"><polygon points="0,0.5 10,0.5 5,6" fill="#dcdcdc"/></svg><div style="left:1107px;top:383px;width:15px;height:17px;background:#8f8f8f;border-top:1px solid #262626;border-bottom:1px solid #262626"></div><div style="left:73px;top:711px;width:1049px;height:18px;background:#2a2a2a"></div><div style="left:74px;top:712px;width:489px;height:15px;background:#484848"></div><div style="left:563px;top:712px;width:543px;height:15px;background:#343434"></div><div style="left:1106px;top:712px;width:16px;height:15px;background:#4a4a4a"></div><svg style="left:80px;top:713px;" width="21" height="12" viewBox="0 0 21 12"><rect x="0.5" y="0.5" width="20" height="11" rx="2.5" fill="#b8b8b8"/><g transform="translate(6,6)"><circle r="2.9" fill="#2a2a2a"/><path d="M-0.9 -4.3 h1.8 v1.5 h-1.8z M-0.9 2.8 h1.8 v1.5 h-1.8z M-4.3 -0.9 v1.8 h1.5 v-1.8z M2.8 -0.9 v1.8 h1.5 v-1.8z" fill="#2a2a2a"/><path d="M-0.9 -4.3 h1.8 v1.5 h-1.8z M-0.9 2.8 h1.8 v1.5 h-1.8z M-4.3 -0.9 v1.8 h1.5 v-1.8z M2.8 -0.9 v1.8 h1.5 v-1.8z" fill="#2a2a2a" transform="rotate(45)"/><circle r="1.1" fill="#b8b8b8"/></g><path d="M11.5 4.5 L14 2 V3.6 H18.5 V5.4 H14 V7Z" fill="#2a2a2a"/><path d="M19 7.5 L16.5 10 V8.4 H12 V6.6 H16.5 V5Z" fill="#2a2a2a" transform="translate(0,0.5)"/></svg><svg style="left:110px;top:713px;" width="15" height="13" viewBox="0 0 15 13"><path d="M1 4 L1 12 L11 12 L11 9" fill="none" stroke="#c8c8c8" stroke-width="1.3"/><path d="M4 9 C5 5 8 4 10 4 L10 1 L14 5 L10 9 L10 6 C7 6 5 7 4 9Z" fill="#c8c8c8"/></svg><div style="left:136px;top:713px;width:52px;height:14px;background:#a6a6a6"></div><div class="t" style="left:138px;top:716.53px;font-size:10px;color:#111;;letter-spacing:-0.059px">200%</div><div style="left:188px;top:712px;width:14px;height:15px;background:linear-gradient(#5b5b5b,#4e4e4e);border:1px solid #2c2c2c"></div><svg style="left:191px;top:717px;" width="7" height="5" viewBox="0 0 7 5"><polygon points="0,0 7,0 3.5,4" fill="#d6d6d6"/></svg><svg style="left:211px;top:715px;" width="10" height="10" viewBox="0 0 10 10"><rect x="0" y="0" width="1.5" height="9" fill="#6a6a6a"/><polygon points="8,0 8,9 2.5,4.5" fill="#6a6a6a"/></svg><svg style="left:230px;top:715px;" width="7" height="10" viewBox="0 0 7 10"><polygon points="6,0 6,9 0.5,4.5" fill="#6a6a6a"/></svg><div style="left:246px;top:713px;width:42px;height:14px;background:#a6a6a6"></div><div class="t" style="left:248px;top:716.53px;font-size:10px;color:#111;">1</div><div style="left:288px;top:712px;width:14px;height:15px;background:linear-gradient(#5b5b5b,#4e4e4e);border:1px solid #2c2c2c"></div><svg style="left:291px;top:717px;" width="7" height="5" viewBox="0 0 7 5"><polygon points="0,0 7,0 3.5,4" fill="#d6d6d6"/></svg><svg style="left:312px;top:715px;" width="7" height="10" viewBox="0 0 7 10"><polygon points="0,0 0,9 5.5,4.5" fill="#6a6a6a"/></svg><svg style="left:328px;top:715px;" width="10" height="10" viewBox="0 0 10 10"><polygon points="0,0 0,9 5.5,4.5" fill="#6a6a6a"/><rect x="7" y="0" width="1.5" height="9" fill="#6a6a6a"/></svg><div style="left:344px;top:712px;width:1px;height:15px;background:#3a3a3a"></div><div class="t" style="left:425.2px;top:717.46px;font-size:9.5px;color:#dadada;font-weight:bold;letter-spacing:-0.272px">Selection</div><div style="left:544px;top:712px;width:1px;height:15px;background:#3a3a3a"></div><svg style="left:552px;top:715px;" width="7" height="10" viewBox="0 0 7 10"><polygon points="0,0 0,9 5.5,4.5" fill="#cfcfcf"/></svg><svg style="left:568px;top:714px;" width="8" height="11" viewBox="0 0 8 11"><polygon points="7,0 7,10 0.5,5" fill="#e0e0e0"/></svg><div style="left:820px;top:712px;width:16px;height:15px;background:#8c8c8c"></div><svg style="left:1093px;top:714px;" width="8" height="11" viewBox="0 0 8 11"><polygon points="0.5,0 0.5,10 7,5" fill="#e0e0e0"/></svg><div style="left:1122px;top:65px;width:244px;height:664px;background:#2b2b2b"></div><div style="left:1125px;top:65px;width:241px;height:11px;background:#2e2e2e;border-top:1px solid #3c3c3c"></div><svg style="left:1353px;top:68px;" width="9" height="6" viewBox="0 0 9 6"><polygon points="0.5,0 0.5,6 4,3" fill="#b8b8b8"/><polygon points="4.5,0 4.5,6 8,3" fill="#b8b8b8"/></svg><div style="left:1125px;top:77px;width:241px;height:17px;background:#2b2b2b"></div><div style="left:1125px;top:77px;width:240px;height:17px;background:#363636;border-top:1px solid #434343"></div><div style="left:1125px;top:93px;width:240px;height:1px;background:#2c2c2c"></div><div style="left:1125px;top:77px;width:46px;height:18px;background:#4a4a4a;border-top:1px solid #5a5a5a"></div><div class="t" style="left:1138px;top:81.16px;font-size:9.5px;color:#e2e2e2;font-weight:bold;letter-spacing:0.239px">Color</div><div style="left:1242px;top:78px;width:1px;height:16px;background:#2e2e2e"></div><div class="t" style="left:1178.2px;top:81.16px;font-size:9.5px;color:#a9a9a9;font-weight:bold;letter-spacing:0.120px">Color Guide</div><div style="left:1320px;top:78px;width:1px;height:16px;background:#2e2e2e"></div><div class="t" style="left:1249px;top:81.16px;font-size:9.5px;color:#a9a9a9;font-weight:bold;letter-spacing:0.065px">Color Themes</div><svg style="left:1347px;top:81px;" width="16" height="10" viewBox="0 0 16 10"><polygon points="0,3.2 5,3.2 2.5,6" fill="#c8c8c8"/><g fill="#141414"><rect x="6" y="0" width="8" height="1"/><rect x="6" y="2" width="8" height="1"/><rect x="6" y="4" width="8" height="1"/><rect x="6" y="6" width="8" height="1"/><rect x="0" y="2.2" width="5" height="1"/></g><g fill="#d0d0d0"><rect x="6" y="1" width="8" height="1"/><rect x="6" y="3" width="8" height="1"/><rect x="6" y="5" width="8" height="1"/><rect x="6" y="7" width="8" height="1"/></g></svg><svg style="left:1130px;top:80px;" width="7" height="11" viewBox="0 0 7 11"><path d="M0.6 4.2 L3 1.2 L5.4 4.2 M0.6 6.8 L3 9.8 L5.4 6.8" fill="none" stroke="#d0d0d0" stroke-width="1.1"/></svg><div style="left:1125px;top:94px;width:240px;height:64px;background:#4a4a4a;border-top:1px solid #565656"></div><div style="left:1125px;top:94px;width:46px;height:1px;background:#4a4a4a"></div><div style="left:1130px;top:103px;width:40px;height:14px;background:#1a1a1a"></div><div style="left:1131px;top:104px;width:12px;height:12px;background:#fff"></div><svg style="left:1131px;top:104px;" width="12" height="12" viewBox="0 0 12 12"><line x1="0" y1="12" x2="12" y2="0" stroke="#f00" stroke-width="1.8"/></svg><div style="left:1144px;top:104px;width:12px;height:12px;background:#050808"></div><div style="left:1157px;top:104px;width:12px;height:12px;background:#fff"></div><div style="left:1131px;top:127px;width:217px;height:25px;background:#111;padding:1px"></div><div style="left:1132px;top:128px;width:215px;height:23px;background:linear-gradient(to bottom,rgba(255,255,255,1) 0%,rgba(255,255,255,0) 50%,rgba(0,0,0,0) 50%,rgba(0,0,0,1) 100%),linear-gradient(to right,#ed1c24 0%,#f7941d 8%,#fff200 16%,#8dc63f 32%,#00a651 45%,#00aeef 54%,#2e3192 66%,#92278f 78%,#ec008c 91%,#ed1c24 100%)"></div><svg style="left:1354px;top:145px;" width="9" height="9" viewBox="0 0 9 9"><g fill="#1e1e1e"><rect x="7" y="1" width="1" height="1"/><rect x="5" y="3" width="1" height="1"/><rect x="7" y="3" width="1" height="1"/><rect x="3" y="5" width="1" height="1"/><rect x="5" y="5" width="1" height="1"/><rect x="7" y="5" width="1" height="1"/><rect x="1" y="7" width="1" height="1"/><rect x="3" y="7" width="1" height="1"/><rect x="5" y="7" width="1" height="1"/><rect x="7" y="7" width="1" height="1"/></g></svg><div style="left:1125px;top:161px;width:241px;height:17px;background:#2b2b2b"></div><div style="left:1125px;top:161px;width:240px;height:17px;background:#363636;border-top:1px solid #434343"></div><div style="left:1125px;top:177px;width:240px;height:1px;background:#2c2c2c"></div><div style="left:1187px;top:162px;width:1px;height:16px;background:#2e2e2e"></div><div class="t" style="left:1131.9px;top:165.16px;font-size:9.5px;color:#a9a9a9;font-weight:bold;letter-spacing:0.275px">Transform</div><div style="left:1228px;top:162px;width:1px;height:16px;background:#2e2e2e"></div><div class="t" style="left:1195.3px;top:165.16px;font-size:9.5px;color:#a9a9a9;font-weight:bold;letter-spacing:0.355px">Align</div><div style="left:1228px;top:161px;width:64px;height:18px;background:#4a4a4a;border-top:1px solid #5a5a5a"></div><div class="t" style="left:1235.2px;top:165.16px;font-size:9.5px;color:#e2e2e2;font-weight:bold;letter-spacing:0.287px">Pathfinder</div><svg style="left:1347px;top:165px;" width="16" height="10" viewBox="0 0 16 10"><polygon points="0,3.2 5,3.2 2.5,6" fill="#c8c8c8"/><g fill="#141414"><rect x="6" y="0" width="8" height="1"/><rect x="6" y="2" width="8" height="1"/><rect x="6" y="4" width="8" height="1"/><rect x="6" y="6" width="8" height="1"/><rect x="0" y="2.2" width="5" height="1"/></g><g fill="#d0d0d0"><rect x="6" y="1" width="8" height="1"/><rect x="6" y="3" width="8" height="1"/><rect x="6" y="5" width="8" height="1"/><rect x="6" y="7" width="8" height="1"/></g></svg><div style="left:1125px;top:178px;width:240px;height:100px;background:#4a4a4a;border-top:1px solid #565656"></div><div style="left:1228px;top:178px;width:64px;height:1px;background:#4a4a4a"></div><div class="t" style="left:1129.6px;top:186.46px;font-size:9.5px;color:#dcdcdc;font-weight:bold;letter-spacing:-0.131px">Shape Modes:</div><div class="t" style="left:1129.6px;top:233.46px;font-size:9.5px;color:#dcdcdc;font-weight:bold;letter-spacing:-0.188px">Pathfinders:</div><svg style="left:1136px;top:206px;" width="14" height="14" viewBox="0 0 14 14"><rect x="0.5" y="0.5" width="9" height="9" fill="#9a9a9a" stroke="#c0c0c0"/><rect x="4.5" y="4.5" width="9" height="9" fill="#9a9a9a" stroke="#c0c0c0"/><rect x="5" y="5" width="4" height="4" fill="#9a9a9a"/></svg><svg style="left:1173px;top:206px;" width="14" height="14" viewBox="0 0 14 14"><rect x="0.5" y="0.5" width="9" height="9" fill="none" stroke="#b0b0b0"/><rect x="4.5" y="4.5" width="9" height="9" fill="#4a4a4a" stroke="#6a6a6a"/><path d="M0.5 0.5 h9 v4 h-5 v5 h-4z" fill="none" stroke="#b8b8b8"/></svg><svg style="left:1210px;top:206px;" width="14" height="14" viewBox="0 0 14 14"><rect x="0.5" y="0.5" width="9" height="9" fill="none" stroke="#b8b8b8"/><rect x="4.5" y="4.5" width="9" height="9" fill="none" stroke="#b8b8b8"/></svg><svg style="left:1247px;top:206px;" width="14" height="14" viewBox="0 0 14 14"><rect x="0.5" y="0.5" width="9" height="9" fill="none" stroke="#b8b8b8"/><rect x="4.5" y="4.5" width="9" height="9" fill="none" stroke="#b8b8b8"/><rect x="5" y="5" width="4" height="4" fill="#8a8a8a"/></svg><div style="left:1280px;top:205px;width:69px;height:16px;background:#4e4e4e;border:1px solid #3a3a3a"></div><div class="t" style="left:1298.6px;top:209.16px;font-size:9.5px;color:#8a8a8a;font-weight:bold;letter-spacing:-0.289px">Expand</div><svg style="left:1139.0px;top:253px;" width="15" height="15" viewBox="0 0 15 15"><rect x="0.5" y="0.5" width="7" height="6" fill="none" stroke="#b8b8b8"/><rect x="3.5" y="3.5" width="7" height="7" fill="none" stroke="#b8b8b8"/><rect x="6.5" y="7.5" width="7" height="6" fill="none" stroke="#b8b8b8"/></svg><svg style="left:1176.5px;top:253px;" width="15" height="15" viewBox="0 0 15 15"><rect x="0" y="0" width="7" height="6" fill="#b0b0b0"/><rect x="4" y="4" width="7" height="6" fill="#c0c0c0" stroke="#4a4a4a"/><rect x="7" y="8" width="7" height="6" fill="#a8a8a8" stroke="#4a4a4a"/></svg><svg style="left:1214.0px;top:253px;" width="15" height="15" viewBox="0 0 15 15"><rect x="0" y="0" width="10" height="9" fill="#c0c0c0"/><rect x="5" y="5" width="9" height="9" fill="#b0b0b0" stroke="#4a4a4a"/></svg><svg style="left:1251.5px;top:253px;" width="15" height="15" viewBox="0 0 15 15"><rect x="0" y="0" width="10" height="9" fill="#555"/><rect x="4" y="4" width="10" height="10" fill="#777"/><rect x="6" y="6" width="5" height="5" fill="#c0c0c0"/></svg><svg style="left:1289.0px;top:253px;" width="15" height="15" viewBox="0 0 15 15"><rect x="0.5" y="0.5" width="8" height="8" fill="none" stroke="#b8b8b8"/><rect x="5.5" y="5.5" width="8" height="8" fill="none" stroke="#b8b8b8"/><rect x="5" y="5" width="3" height="3" fill="none" stroke="#b8b8b8"/></svg><svg style="left:1326.5px;top:253px;" width="15" height="15" viewBox="0 0 15 15"><rect x="0.5" y="0.5" width="9" height="9" fill="#3e3e3e" stroke="#6a6a6a"/><path d="M9.5 4.5 h4 v9 h-9 v-4 h5z" fill="none" stroke="#b8b8b8"/></svg><div style="left:1125px;top:281px;width:241px;height:17px;background:#2b2b2b"></div><div style="left:1125px;top:281px;width:240px;height:17px;background:#363636;border-top:1px solid #434343"></div><div style="left:1125px;top:297px;width:240px;height:1px;background:#2c2c2c"></div><div style="left:1125px;top:281px;width:58px;height:18px;background:#4a4a4a;border-top:1px solid #5a5a5a"></div><div class="t" style="left:1131.7px;top:285.16px;font-size:9.5px;color:#e2e2e2;font-weight:bold;letter-spacing:0.049px">Swatches</div><div style="left:1234px;top:282px;width:1px;height:16px;background:#2e2e2e"></div><div class="t" style="left:1190.2px;top:285.16px;font-size:9.5px;color:#a9a9a9;font-weight:bold;letter-spacing:-0.391px">Brushes</div><div style="left:1288px;top:282px;width:1px;height:16px;background:#2e2e2e"></div><div class="t" style="left:1241px;top:285.16px;font-size:9.5px;color:#a9a9a9;font-weight:bold;letter-spacing:0.043px">Symbols</div><svg style="left:1347px;top:285px;" width="16" height="10" viewBox="0 0 16 10"><polygon points="0,3.2 5,3.2 2.5,6" fill="#c8c8c8"/><g fill="#141414"><rect x="6" y="0" width="8" height="1"/><rect x="6" y="2" width="8" height="1"/><rect x="6" y="4" width="8" height="1"/><rect x="6" y="6" width="8" height="1"/><rect x="0" y="2.2" width="5" height="1"/></g><g fill="#d0d0d0"><rect x="6" y="1" width="8" height="1"/><rect x="6" y="3" width="8" height="1"/><rect x="6" y="5" width="8" height="1"/><rect x="6" y="7" width="8" height="1"/></g></svg><div style="left:1125px;top:298px;width:240px;height:261px;background:#4a4a4a;border-top:1px solid #565656"></div><div style="left:1125px;top:298px;width:58px;height:1px;background:#4a4a4a"></div><div style="left:1130px;top:304px;width:20px;height:20px;background:#fff;border:1px solid #2a2a2a"></div><svg style="left:1131px;top:305px;" width="18" height="18" viewBox="0 0 18 18"><line x1="0" y1="18" x2="18" y2="0" stroke="#f00" stroke-width="1.8"/></svg><div style="left:1141px;top:315px;width:19px;height:19px;background:#000;border:1px solid #fff;box-shadow:0 0 0 1px #2a2a2a"></div><div style="left:1145px;top:319px;width:11px;height:11px;background:#4a4a4a;border:1.5px solid #fff;box-shadow:0 0 0 1px #000"></div><div style="left:1308px;top:305px;width:51px;height:22px;background:#3a3a3a;border:1px solid #333"></div><div style="left:1309px;top:306px;width:24px;height:20px;background:#3a3a3a"></div><div style="left:1334px;top:306px;width:24px;height:20px;background:#575757"></div><svg style="left:1314px;top:308px;" width="14" height="14" viewBox="0 0 14 14"><g fill="#d8d8d8"><rect x="0" y="2" width="12" height="1.6"/><rect x="0" y="5.5" width="12" height="1.6"/><rect x="0" y="9" width="12" height="1.6"/><rect x="0" y="12.5" width="12" height="1.6"/></g></svg><svg style="left:1339px;top:308px;" width="14" height="14" viewBox="0 0 14 14"><g fill="#d8d8d8"><rect x="0.0" y="1.0" width="3.2" height="3.2"/><rect x="4.6" y="1.0" width="3.2" height="3.2"/><rect x="9.2" y="1.0" width="3.2" height="3.2"/><rect x="0.0" y="5.6" width="3.2" height="3.2"/><rect x="4.6" y="5.6" width="3.2" height="3.2"/><rect x="9.2" y="5.6" width="3.2" height="3.2"/><rect x="0.0" y="10.2" width="3.2" height="3.2"/><rect x="4.6" y="10.2" width="3.2" height="3.2"/><rect x="9.2" y="10.2" width="3.2" height="3.2"/></g></svg><div style="left:1130px;top:339px;width:230px;height:202px;background:#2c2c2c"></div><div style="left:1131px;top:340px;width:216px;height:19px;background:#474747"></div><div style="left:1151px;top:342px;width:15px;height:15px;background:#fff;border:1px solid #2a2a2a"></div><svg style="left:1152px;top:343px;" width="13" height="13" viewBox="0 0 13 13"><line x1="0" y1="13" x2="13" y2="0" stroke="#f00" stroke-width="1.8"/></svg><div class="t" style="left:1172px;top:346.04px;font-size:10px;color:#dedede;;letter-spacing:0.346px">[None]</div><svg style="left:1330px;top:344px;" width="13" height="12" viewBox="0 0 13 12"><rect x="0.5" y="0.5" width="11" height="11" fill="#444" stroke="#c8c8c8"/><line x1="1" y1="11" x2="11" y2="1" stroke="#c8c8c8" stroke-width="1"/></svg><div style="left:1131px;top:360px;width:216px;height:19px;background:#474747"></div><div style="left:1151px;top:362px;width:15px;height:15px;background:#000;border:1px solid #2a2a2a"></div><div class="t" style="left:1172px;top:366.04px;font-size:10px;color:#dedede;;letter-spacing:0.091px">[Registration]</div><svg style="left:1330px;top:364px;" width="13" height="12" viewBox="0 0 13 12"><rect x="0" y="0" width="12" height="12" fill="#bdbdbd"/><circle cx="6" cy="6" r="3.3" fill="none" stroke="#111" stroke-width="1"/><path d="M6 1 V11 M1 6 H11" stroke="#111" stroke-width="1"/></svg><div style="left:1131px;top:380px;width:216px;height:19px;background:#474747"></div><div style="left:1151px;top:382px;width:15px;height:15px;background:#fff;border:1px solid #2a2a2a"></div><div class="t" style="left:1172px;top:386.04px;font-size:10px;color:#dedede;;letter-spacing:0.259px">White</div><svg style="left:1331px;top:383px;" width="11" height="12" viewBox="0 0 11 12"><rect x="0" y="0" width="11" height="1" fill="#2a2a2a"/><rect x="0" y="1" width="11" height="11" fill="#e8e8e8"/><polygon points="1,2 10,2 5.5,6.5" fill="#e600e6"/><polygon points="1,11 10,11 5.5,6.5" fill="#000"/><polygon points="1,2 1,11 5.5,6.5" fill="#00dede"/><polygon points="10,2 10,11 5.5,6.5" fill="#e6e600"/><path d="M1 2 L10 11 M10 2 L1 11" stroke="#000" stroke-width="0.6"/></svg><div style="left:1131px;top:400px;width:216px;height:19px;background:#5b6272"></div><div style="left:1151px;top:402px;width:15px;height:15px;background:#000;border:1px solid #2a2a2a"></div><div class="t" style="left:1172px;top:406.04px;font-size:10px;color:#dedede;;letter-spacing:0.037px">Black</div><svg style="left:1331px;top:403px;" width="11" height="12" viewBox="0 0 11 12"><rect x="0" y="0" width="11" height="1" fill="#2a2a2a"/><rect x="0" y="1" width="11" height="11" fill="#e8e8e8"/><polygon points="1,2 10,2 5.5,6.5" fill="#e600e6"/><polygon points="1,11 10,11 5.5,6.5" fill="#000"/><polygon points="1,2 1,11 5.5,6.5" fill="#00dede"/><polygon points="10,2 10,11 5.5,6.5" fill="#e6e600"/><path d="M1 2 L10 11 M10 2 L1 11" stroke="#000" stroke-width="0.6"/></svg><div style="left:1131px;top:420px;width:216px;height:19px;background:#474747"></div><div style="left:1151px;top:422px;width:15px;height:15px;background:#ed1c24;border:1px solid #2a2a2a"></div><div class="t" style="left:1172px;top:426.04px;font-size:10px;color:#dedede;;letter-spacing:-0.602px">CMYK Red</div><svg style="left:1331px;top:423px;" width="11" height="12" viewBox="0 0 11 12"><rect x="0" y="0" width="11" height="1" fill="#2a2a2a"/><rect x="0" y="1" width="11" height="11" fill="#e8e8e8"/><polygon points="1,2 10,2 5.5,6.5" fill="#e600e6"/><polygon points="1,11 10,11 5.5,6.5" fill="#000"/><polygon points="1,2 1,11 5.5,6.5" fill="#00dede"/><polygon points="10,2 10,11 5.5,6.5" fill="#e6e600"/><path d="M1 2 L10 11 M10 2 L1 11" stroke="#000" stroke-width="0.6"/></svg><div style="left:1131px;top:440px;width:216px;height:19px;background:#474747"></div><div style="left:1151px;top:442px;width:15px;height:15px;background:#fff200;border:1px solid #2a2a2a"></div><div class="t" style="left:1172px;top:446.04px;font-size:10px;color:#dedede;;letter-spacing:-0.303px">CMYK Yellow</div><svg style="left:1331px;top:443px;" width="11" height="12" viewBox="0 0 11 12"><rect x="0" y="0" width="11" height="1" fill="#2a2a2a"/><rect x="0" y="1" width="11" height="11" fill="#e8e8e8"/><polygon points="1,2 10,2 5.5,6.5" fill="#e600e6"/><polygon points="1,11 10,11 5.5,6.5" fill="#000"/><polygon points="1,2 1,11 5.5,6.5" fill="#00dede"/><polygon points="10,2 10,11 5.5,6.5" fill="#e6e600"/><path d="M1 2 L10 11 M10 2 L1 11" stroke="#000" stroke-width="0.6"/></svg><div style="left:1131px;top:460px;width:216px;height:19px;background:#474747"></div><div style="left:1151px;top:462px;width:15px;height:15px;background:#00a651;border:1px solid #2a2a2a"></div><div class="t" style="left:1172px;top:466.04px;font-size:10px;color:#dedede;;letter-spacing:-0.452px">CMYK Green</div><svg style="left:1331px;top:463px;" width="11" height="12" viewBox="0 0 11 12"><rect x="0" y="0" width="11" height="1" fill="#2a2a2a"/><rect x="0" y="1" width="11" height="11" fill="#e8e8e8"/><polygon points="1,2 10,2 5.5,6.5" fill="#e600e6"/><polygon points="1,11 10,11 5.5,6.5" fill="#000"/><polygon points="1,2 1,11 5.5,6.5" fill="#00dede"/><polygon points="10,2 10,11 5.5,6.5" fill="#e6e600"/><path d="M1 2 L10 11 M10 2 L1 11" stroke="#000" stroke-width="0.6"/></svg><div style="left:1131px;top:480px;width:216px;height:19px;background:#474747"></div><div style="left:1151px;top:482px;width:15px;height:15px;background:#00aeef;border:1px solid #2a2a2a"></div><div class="t" style="left:1172px;top:486.04px;font-size:10px;color:#dedede;;letter-spacing:-0.802px">CMYK Cyan</div><svg style="left:1331px;top:483px;" width="11" height="12" viewBox="0 0 11 12"><rect x="0" y="0" width="11" height="1" fill="#2a2a2a"/><rect x="0" y="1" width="11" height="11" fill="#e8e8e8"/><polygon points="1,2 10,2 5.5,6.5" fill="#e600e6"/><polygon points="1,11 10,11 5.5,6.5" fill="#000"/><polygon points="1,2 1,11 5.5,6.5" fill="#00dede"/><polygon points="10,2 10,11 5.5,6.5" fill="#e6e600"/><path d="M1 2 L10 11 M10 2 L1 11" stroke="#000" stroke-width="0.6"/></svg><div style="left:1131px;top:500px;width:216px;height:19px;background:#474747"></div><div style="left:1151px;top:502px;width:15px;height:15px;background:#2e3192;border:1px solid #2a2a2a"></div><div class="t" style="left:1172px;top:506.04px;font-size:10px;color:#dedede;;letter-spacing:-0.536px">CMYK Blue</div><svg style="left:1331px;top:503px;" width="11" height="12" viewBox="0 0 11 12"><rect x="0" y="0" width="11" height="1" fill="#2a2a2a"/><rect x="0" y="1" width="11" height="11" fill="#e8e8e8"/><polygon points="1,2 10,2 5.5,6.5" fill="#e600e6"/><polygon points="1,11 10,11 5.5,6.5" fill="#000"/><polygon points="1,2 1,11 5.5,6.5" fill="#00dede"/><polygon points="10,2 10,11 5.5,6.5" fill="#e6e600"/><path d="M1 2 L10 11 M10 2 L1 11" stroke="#000" stroke-width="0.6"/></svg><div style="left:1131px;top:520px;width:216px;height:19px;background:#474747"></div><div style="left:1151px;top:522px;width:15px;height:15px;background:#ec008c;border:1px solid #2a2a2a"></div><div class="t" style="left:1172px;top:526.03px;font-size:10px;color:#dedede;;letter-spacing:-0.363px">CMYK Magenta</div><svg style="left:1331px;top:523px;" width="11" height="12" viewBox="0 0 11 12"><rect x="0" y="0" width="11" height="1" fill="#2a2a2a"/><rect x="0" y="1" width="11" height="11" fill="#e8e8e8"/><polygon points="1,2 10,2 5.5,6.5" fill="#e600e6"/><polygon points="1,11 10,11 5.5,6.5" fill="#000"/><polygon points="1,2 1,11 5.5,6.5" fill="#00dede"/><polygon points="10,2 10,11 5.5,6.5" fill="#e6e600"/><path d="M1 2 L10 11 M10 2 L1 11" stroke="#000" stroke-width="0.6"/></svg><div style="left:1348px;top:340px;width:11px;height:200px;background:#3a3a3a"></div><svg style="left:1349px;top:343px;" width="9" height="6" viewBox="0 0 9 6"><polygon points="0.5,5.5 8.5,5.5 4.5,0.5" fill="#d8d8d8"/></svg><div style="left:1349px;top:356px;width:9px;height:24px;background:#8a8a8a"></div><svg style="left:1349px;top:531px;" width="9" height="6" viewBox="0 0 9 6"><polygon points="0.5,0.5 8.5,0.5 4.5,5.5" fill="#d8d8d8"/></svg><svg style="left:1133px;top:544px;" width="18" height="13" viewBox="0 0 18 13"><rect x="0.5" y="1" width="2" height="10" fill="#c4c4c4"/><rect x="3.5" y="1" width="2" height="10" fill="#c4c4c4"/><path d="M6.5 1.5 L10 11" stroke="#c4c4c4" stroke-width="2"/><polygon points="12,9.5 17,9.5 14.5,12" fill="#c4c4c4"/></svg><svg style="left:1163px;top:544px;" width="18" height="13" viewBox="0 0 18 13"><path d="M5 3 A4 4 0 1 0 5 10" fill="none" stroke="#c4c4c4" stroke-width="1.3"/><circle cx="4" cy="6.5" r="1.6" fill="none" stroke="#c4c4c4"/><circle cx="8.5" cy="2" r="1.8" fill="#c4c4c4"/><circle cx="8.5" cy="11" r="1.8" fill="#c4c4c4"/><path d="M5 6 L8 2.5 M5 7 L8 10.5" stroke="#c4c4c4"/></svg><svg style="left:1187px;top:544px;" width="18" height="13" viewBox="0 0 18 13"><path d="M0.5 11.5 V0.5 H5 L6.5 2 H10 V4.5" fill="none" stroke="#c4c4c4" stroke-width="1.1"/><ellipse cx="10.5" cy="8" rx="5" ry="3.6" fill="#4a4a4a" stroke="#c4c4c4" stroke-width="1.4"/><ellipse cx="10.5" cy="8" rx="2.2" ry="1.6" fill="none" stroke="#c4c4c4" stroke-width="1.1"/></svg><svg style="left:1220px;top:544px;" width="18" height="13" viewBox="0 0 18 13"><g fill="#c4c4c4"><rect x="0.0" y="0.5" width="2.8" height="2.8"/><rect x="3.6" y="0.5" width="2.8" height="2.8"/><rect x="7.2" y="0.5" width="2.8" height="2.8"/><rect x="0.0" y="4.1" width="2.8" height="2.8"/><rect x="3.6" y="4.1" width="2.8" height="2.8"/><rect x="7.2" y="4.1" width="2.8" height="2.8"/><rect x="0.0" y="7.7" width="2.8" height="2.8"/><rect x="3.6" y="7.7" width="2.8" height="2.8"/><rect x="7.2" y="7.7" width="2.8" height="2.8"/></g><rect x="0" y="7.7" width="2.8" height="2.8" fill="#111"/><rect x="7.2" y="4.1" width="2.8" height="2.8" fill="#111"/><polygon points="11,9.5 16,9.5 13.5,12" fill="#c4c4c4"/></svg><svg style="left:1248px;top:544px;" width="18" height="13" viewBox="0 0 18 13"><rect x="0.5" y="0.5" width="10" height="11" fill="none" stroke="#c4c4c4" stroke-width="1.1"/><path d="M2.5 3.5 h1.5 M5 3.5 h4 M2.5 6 h1.5 M5 6 h4 M2.5 8.5 h1.5 M5 8.5 h4" stroke="#c4c4c4" stroke-width="1.1"/></svg><svg style="left:1274px;top:544px;" width="18" height="13" viewBox="0 0 18 13"><defs><linearGradient id="fg" x1="0" y1="0" x2="0" y2="1"><stop offset="0" stop-color="#d0d0d0"/><stop offset="1" stop-color="#a8a8a8"/></linearGradient></defs><path d="M0 1 H5 L6.5 3 H12 V11.5 H0Z" fill="url(#fg)"/></svg><svg style="left:1300px;top:544px;" width="18" height="13" viewBox="0 0 18 13"><path d="M0.5 0.5 H10.5 V11.5 H3.5 L0.5 8.5Z" fill="url(#fg)"/><path d="M0.5 8.5 L3.5 8.5 L3.5 11.5" fill="#555" stroke="#333" stroke-width="0.5"/></svg><svg style="left:1326px;top:544px;" width="18" height="13" viewBox="0 0 18 13"><path d="M0 2.5 H11.5" stroke="#c4c4c4" stroke-width="1.3"/><path d="M3.5 2 V0.5 H8 V2" fill="none" stroke="#c4c4c4"/><path d="M1.5 4 H10 L9.5 11.5 H2Z" fill="none" stroke="#c4c4c4" stroke-width="1.1"/><path d="M4 5.5 V10 M5.75 5.5 V10 M7.5 5.5 V10" stroke="#c4c4c4" stroke-width="0.9"/></svg><div style="left:1125px;top:563px;width:241px;height:16px;background:#2b2b2b"></div><div style="left:1125px;top:563px;width:240px;height:16px;background:#363636;border-top:1px solid #434343"></div><div style="left:1125px;top:578px;width:240px;height:1px;background:#2c2c2c"></div><div style="left:1125px;top:563px;width:82px;height:17px;background:#4a4a4a;border-top:1px solid #5a5a5a"></div><div class="t" style="left:1138.4px;top:567.16px;font-size:9.5px;color:#e2e2e2;font-weight:bold;letter-spacing:-0.039px">Transparency</div><svg style="left:1347px;top:567px;" width="16" height="10" viewBox="0 0 16 10"><polygon points="0,3.2 5,3.2 2.5,6" fill="#c8c8c8"/><g fill="#141414"><rect x="6" y="0" width="8" height="1"/><rect x="6" y="2" width="8" height="1"/><rect x="6" y="4" width="8" height="1"/><rect x="6" y="6" width="8" height="1"/><rect x="0" y="2.2" width="5" height="1"/></g><g fill="#d0d0d0"><rect x="6" y="1" width="8" height="1"/><rect x="6" y="3" width="8" height="1"/><rect x="6" y="5" width="8" height="1"/><rect x="6" y="7" width="8" height="1"/></g></svg><svg style="left:1130px;top:566px;" width="7" height="11" viewBox="0 0 7 11"><path d="M0.6 4.2 L3 1.2 L5.4 4.2 M0.6 6.8 L3 9.8 L5.4 6.8" fill="none" stroke="#d0d0d0" stroke-width="1.1"/></svg><div style="left:1125px;top:579px;width:240px;height:106px;background:#4a4a4a;border-top:1px solid #565656"></div><div style="left:1125px;top:579px;width:82px;height:1px;background:#4a4a4a"></div><div style="left:1131px;top:587px;width:93px;height:19px;background:linear-gradient(#565656,#4a4a4a);border:1px solid #2c2c2c"></div><div style="left:1205px;top:589px;width:1px;height:15px;background:#3a3a3a"></div><div class="t" style="left:1137.8px;top:592.46px;font-size:9.5px;color:#dcdcdc;font-weight:bold;letter-spacing:-0.053px">Normal</div><svg style="left:1211px;top:594px;" width="8" height="6" viewBox="0 0 8 6"><polygon points="0,0 7,0 3.5,4.5" fill="#d6d6d6"/></svg><div class="t" style="left:1230.2px;top:592.96px;font-size:9.5px;color:#dcdcdc;font-weight:bold;letter-spacing:-0.192px">Opacity:</div><div style="left:1271px;top:587px;width:53px;height:19px;background:#a6a6a6;border:1px solid #2c2c2c"></div><div class="t" style="left:1274.3px;top:592.03px;font-size:10px;color:#111;;letter-spacing:-0.293px">100%</div><div style="left:1324px;top:587px;width:15px;height:19px;background:linear-gradient(#5b5b5b,#4e4e4e);border:1px solid #2c2c2c;border-left:0"></div><svg style="left:1329px;top:593px;" width="5" height="8" viewBox="0 0 5 8"><polygon points="0,0 0,7 4.5,3.5" fill="#d6d6d6"/></svg><div style="left:1130px;top:612px;width:221px;height:1px;background:#3c3c3c"></div><div style="left:1131px;top:621px;width:132px;height:55px;background:#484848;border:1px solid #333"></div><div style="left:1268px;top:620px;width:76px;height:19px;background:#4c4c4c;border:1px solid #3a3a3a"></div><div class="t" style="left:1281.6px;top:626.46px;font-size:9.5px;color:#8a8a8a;font-weight:bold;letter-spacing:-0.113px">Make Mask</div><div style="left:1268px;top:646px;width:12px;height:12px;background:#484848;border:1px solid #3a3a3a"></div><div class="t" style="left:1283.7px;top:647.96px;font-size:9.5px;color:#8a8a8a;font-weight:bold;letter-spacing:-0.361px">Clip</div><div style="left:1268px;top:666px;width:12px;height:12px;background:#484848;border:1px solid #3a3a3a"></div><div class="t" style="left:1283.7px;top:667.96px;font-size:9.5px;color:#8a8a8a;font-weight:bold;letter-spacing:0.039px">Invert Mask</div><div style="left:1125px;top:687px;width:241px;height:18px;background:#2b2b2b"></div><div style="left:1125px;top:687px;width:240px;height:18px;background:#363636;border-top:1px solid #434343"></div><div style="left:1125px;top:704px;width:240px;height:1px;background:#2c2c2c"></div><div style="left:1125px;top:687px;width:54px;height:19px;background:#4a4a4a;border-top:1px solid #5a5a5a"></div><div class="t" style="left:1132.2px;top:691.96px;font-size:9.5px;color:#e2e2e2;font-weight:bold;letter-spacing:-0.046px">Libraries</div><div style="left:1247px;top:688px;width:1px;height:17px;background:#2e2e2e"></div><div class="t" style="left:1186px;top:691.96px;font-size:9.5px;color:#a9a9a9;font-weight:bold;letter-spacing:0.053px">Appearance</div><div style="left:1326px;top:688px;width:1px;height:17px;background:#2e2e2e"></div><div class="t" style="left:1254px;top:691.96px;font-size:9.5px;color:#a9a9a9;font-weight:bold;letter-spacing:0.041px">Graphic Styles</div><svg style="left:1347px;top:691px;" width="16" height="10" viewBox="0 0 16 10"><polygon points="0,3.2 5,3.2 2.5,6" fill="#c8c8c8"/><g fill="#141414"><rect x="6" y="0" width="8" height="1"/><rect x="6" y="2" width="8" height="1"/><rect x="6" y="4" width="8" height="1"/><rect x="6" y="6" width="8" height="1"/><rect x="0" y="2.2" width="5" height="1"/></g><g fill="#d0d0d0"><rect x="6" y="1" width="8" height="1"/><rect x="6" y="3" width="8" height="1"/><rect x="6" y="5" width="8" height="1"/><rect x="6" y="7" width="8" height="1"/></g></svg><div style="left:1125px;top:705px;width:241px;height:4px;background:#2b2b2b"></div><div style="left:1125px;top:709px;width:241px;height:17px;background:#2b2b2b"></div><div style="left:1125px;top:709px;width:240px;height:17px;background:#363636;border-top:1px solid #434343"></div><div style="left:1125px;top:725px;width:240px;height:1px;background:#2c2c2c"></div><div style="left:1125px;top:709px;width:43px;height:18px;background:#4a4a4a;border-top:1px solid #5a5a5a"></div><div class="t" style="left:1132.2px;top:713.16px;font-size:9.5px;color:#e2e2e2;font-weight:bold;letter-spacing:-0.394px">Layers</div><div style="left:1230px;top:710px;width:1px;height:16px;background:#2e2e2e"></div><div class="t" style="left:1175px;top:713.16px;font-size:9.5px;color:#a9a9a9;font-weight:bold;letter-spacing:0.195px">Artboards</div><svg style="left:1347px;top:713px;" width="16" height="10" viewBox="0 0 16 10"><polygon points="0,3.2 5,3.2 2.5,6" fill="#c8c8c8"/><g fill="#141414"><rect x="6" y="0" width="8" height="1"/><rect x="6" y="2" width="8" height="1"/><rect x="6" y="4" width="8" height="1"/><rect x="6" y="6" width="8" height="1"/><rect x="0" y="2.2" width="5" height="1"/></g><g fill="#d0d0d0"><rect x="6" y="1" width="8" height="1"/><rect x="6" y="3" width="8" height="1"/><rect x="6" y="5" width="8" height="1"/><rect x="6" y="7" width="8" height="1"/></g></svg><div style="left:1125px;top:726px;width:241px;height:3px;background:#2b2b2b"></div></body></html>
